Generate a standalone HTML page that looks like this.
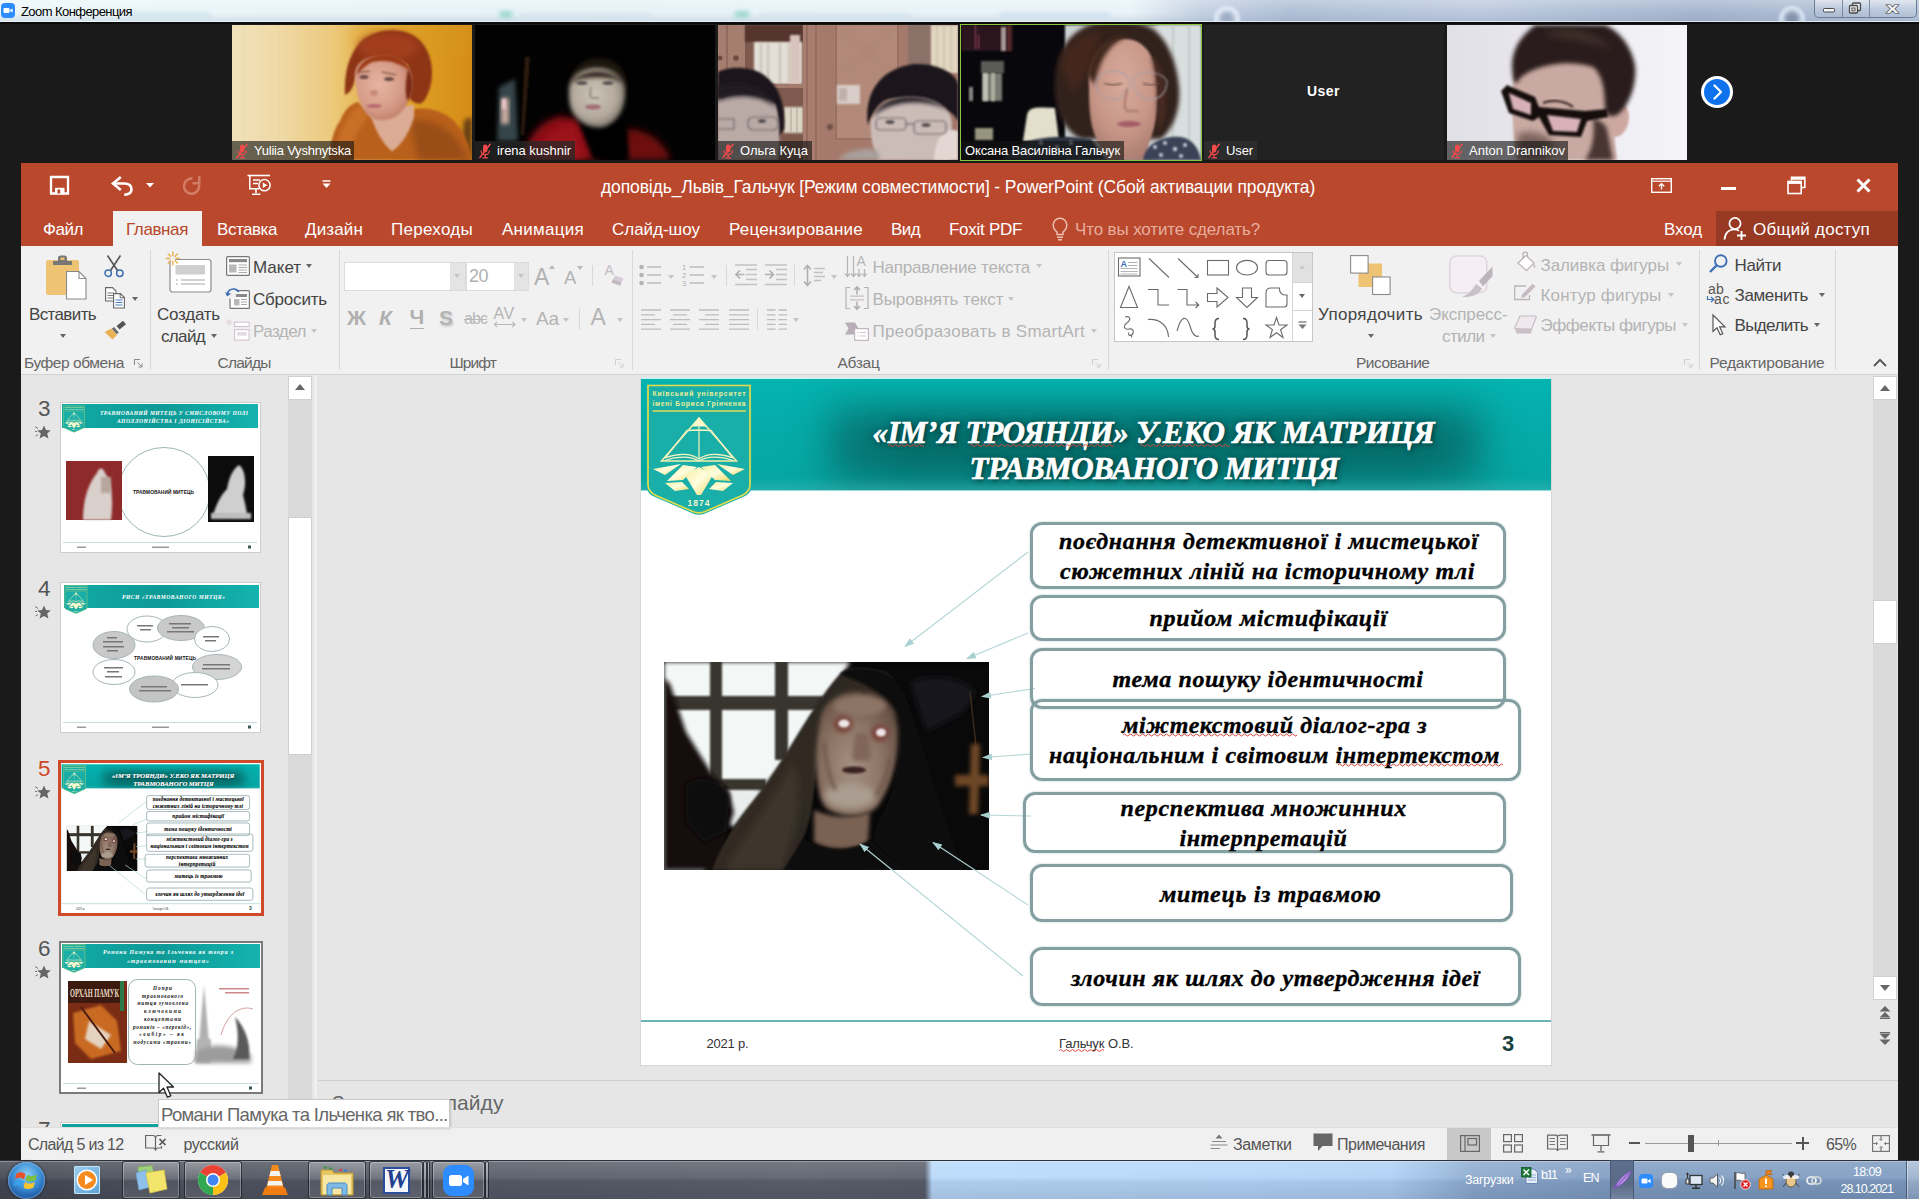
<!DOCTYPE html>
<html lang="ru"><head><meta charset="utf-8"><title>Zoom</title>
<style>
html,body{margin:0;padding:0}
body{width:1919px;height:1199px;background:#1a1a1a;position:relative;overflow:hidden;font-family:"Liberation Sans",sans-serif;}
.a{position:absolute}
.t{position:absolute;white-space:nowrap;line-height:1;}
svg{position:absolute;overflow:visible}
.ser{font-family:"Liberation Serif",serif}
</style></head><body>
<!-- ZOOM TITLE BAR -->
<div class="a" style="left:0;top:0;width:1919px;height:21.500px;background:linear-gradient(90deg,#ecf6f9 0,#e5f2f6 600px,#e9f3f8 1130px,#c4d1e2 1200px,#afbfd6 1290px,#bccade 1480px,#aebed5 1600px,#a5b5ce 1700px,#b6c5da 1919px)"></div>
<div class="a" style="left:0;top:0;width:1919px;height:21px;background:linear-gradient(180deg,rgba(255,255,255,.25) 0,rgba(255,255,255,0) 60%,rgba(120,140,170,.18) 100%)"></div>
<!-- faint blurred background remnants -->
<div class="a" style="left:130px;top:13px;width:80px;height:5px;background:#cfe3ee;filter:blur(2px)"></div>
<div class="a" style="left:500px;top:11px;width:12px;height:7px;background:#9fd8cf;filter:blur(2px)"></div>
<div class="a" style="left:520px;top:14px;width:130px;height:4px;background:#d3e2ef;filter:blur(2px)"></div>
<div class="a" style="left:735px;top:11px;width:14px;height:7px;background:#9fd8cf;filter:blur(2px)"></div>
<div class="a" style="left:760px;top:14px;width:150px;height:4px;background:#d3e2ef;filter:blur(2px)"></div>
<div class="a" style="left:1000px;top:13px;width:110px;height:5px;background:#cfe0f0;filter:blur(2px)"></div>
<div class="a" style="left:0;top:20.500px;width:1919px;height:1px;background:rgba(235,242,250,.8)"></div>
<div class="a" style="left:0;top:21.500px;width:1919px;height:2px;background:#0c0c0c"></div>
<div class="a" style="left:1777px;top:2px;width:30px;height:19px;overflow:hidden"><div class="a" style="left:1px;top:3px;width:28px;height:28px;border-radius:50%;background:radial-gradient(circle,#7f8fa8 0,#8a9ab2 25%,#dbe8f6 55%,rgba(200,215,235,0) 75%);filter:blur(1px)"></div></div>
<div class="a" style="left:1212px;top:2px;width:30px;height:19px;overflow:hidden"><div class="a" style="left:1px;top:3px;width:28px;height:28px;border-radius:50%;background:radial-gradient(circle,#9aa9c0 0,#a5b4ca 25%,#e4eef8 55%,rgba(220,232,245,0) 75%);filter:blur(1px)"></div></div>
<!-- zoom icon -->
<div class="a" style="left:1px;top:3px;width:14px;height:15px;border-radius:4px;background:#2d8cff"></div>
<svg style="left:1px;top:3px" width="14" height="15" viewBox="0 0 14 15"><rect x="2.5" y="5" width="6" height="5" rx="1.2" fill="#fff"></rect><path d="M9 7 L11.6 5.4 V9.6 L9 8 Z" fill="#fff"></path></svg>
<span class="t" style="left: 21px; top: 4.5px; font-size: 13px; color: rgb(0, 0, 0); letter-spacing: -0.57px;">Zoom Конференция</span>
<!-- window buttons -->
<div class="a" style="left:1814px;top:0;width:103px;height:18px;border:1px solid #6d7c93;border-top:none;border-radius:0 0 5px 5px;box-sizing:border-box;background:linear-gradient(180deg,rgba(255,255,255,.45),rgba(255,255,255,.1) 50%,rgba(180,195,215,.2))"></div>
<div class="a" style="left:1842px;top:0;width:1px;height:17px;background:#7b8aa1"></div>
<div class="a" style="left:1869px;top:0;width:1px;height:17px;background:#7b8aa1"></div>
<svg style="left:1814px;top:0" width="103" height="18" viewBox="0 0 103 18">
<rect x="9.500" y="8.500" width="11" height="3.500" rx=".8" fill="#f4f6f8" stroke="#4a4a4a" stroke-width="1"></rect>
<rect x="38.500" y="3" width="8" height="7.500" rx="1" fill="#e8ecf0" stroke="#4a4a4a" stroke-width="1.300"></rect>
<rect x="35.500" y="5.500" width="8" height="7.500" rx="1" fill="#eef1f4" stroke="#4a4a4a" stroke-width="1.300"></rect><rect x="38" y="8" width="3" height="2.800" fill="#f8f8f8" stroke="#4a4a4a" stroke-width="1"></rect>
<text x="72.500" y="13" font-family="Liberation Sans" font-weight="bold" font-size="15" fill="#f4f6f8" stroke="#444" stroke-width="1.100" paint-order="stroke" textLength="12" lengthAdjust="spacingAndGlyphs">x</text>
</svg>

<!-- VIDEO STRIP -->
<svg width="0" height="0"><defs>
<filter id="b2" x="-20%" y="-20%" width="140%" height="140%"><feGaussianBlur stdDeviation="2"></feGaussianBlur></filter>
<filter id="b3" x="-20%" y="-20%" width="140%" height="140%"><feGaussianBlur stdDeviation="3.5"></feGaussianBlur></filter>
<filter id="b6" x="-30%" y="-30%" width="160%" height="160%"><feGaussianBlur stdDeviation="6"></feGaussianBlur></filter>
<filter id="b1" x="-20%" y="-20%" width="140%" height="140%"><feGaussianBlur stdDeviation="1"></feGaussianBlur></filter>
<symbol id="mic" viewBox="0 0 14 16"><rect x="5" y="1.5" width="4.4" height="8" rx="2.2" fill="#f04a4a"></rect><path d="M3 7.5 a4.2 4.2 0 0 0 8.4 0" fill="none" stroke="#f04a4a" stroke-width="1.3"></path><path d="M7.2 12 V14.5 M4.5 14.8 H10" stroke="#f04a4a" stroke-width="1.3"></path><path d="M12.5 0.8 L1.5 15" stroke="#f04a4a" stroke-width="1.5"></path></symbol>
</defs></svg>

<!-- tile 1 -->
<svg style="left:232px;top:25px" width="240" height="135" viewBox="0 0 240 135"><defs><clipPath id="c1"><rect width="240" height="135"></rect></clipPath>
<linearGradient id="g1" x1="0" x2="1"><stop offset="0" stop-color="#f1e2bb"></stop><stop offset=".2" stop-color="#efd9a6"></stop><stop offset=".42" stop-color="#ecc97a"></stop><stop offset=".6" stop-color="#e4b044"></stop><stop offset=".8" stop-color="#dd9c22"></stop><stop offset="1" stop-color="#d48c16"></stop></linearGradient>
<radialGradient id="f1" cx=".42" cy=".45" r=".65"><stop offset="0" stop-color="#e6b5a2"></stop><stop offset=".6" stop-color="#d69c88"></stop><stop offset="1" stop-color="#b87660"></stop></radialGradient></defs>
<g clip-path="url(#c1)"><rect width="240" height="135" fill="url(#g1)"></rect>
<rect x="120" y="0" width="120" height="30" fill="#d89a20" opacity=".35" filter="url(#b6)"></rect>
<g stroke="#e6cf9a" stroke-width="1" opacity=".5"><path d="M12 0 V118 M30 0 V118 M47 0 V118 M66 0 V118 M84 0 V135"></path></g>
<path d="M232 95 L240 92 V135 H228 Z" fill="#6a4218" filter="url(#b2)"></path>
<path d="M97 135 C98 118 102 104 108 96 C112 86 118 79 126 77 L140 92 L160 126 L182 84 C196 82 212 86 222 96 C232 106 238 120 240 135 Z" fill="#b9611e" filter="url(#b1)"></path>
<path d="M178 96 C200 92 224 104 236 135 H186 Z" fill="#8f4612" opacity=".75" filter="url(#b3)"></path>
<path d="M104 120 C112 96 120 84 128 80 L136 92 C126 104 118 120 116 135 H100Z" fill="#c96f26" filter="url(#b2)"></path>
<path d="M137 84 L182 80 L182 92 C178 106 170 120 160 126 C150 118 142 104 137 84 Z" fill="#dcab94" filter="url(#b1)"></path>
<path d="M113 70 C112 50 116 30 128 18 C140 6 160 2 176 8 C192 14 200 30 200 48 C200 60 196 72 190 78 C184 80 178 76 176 70 L176 40 C160 30 140 30 126 44 C122 56 122 66 113 70Z" fill="#8e3417" filter="url(#b1)"></path>
<ellipse cx="156" cy="22" rx="30" ry="14" fill="#a23e1a" filter="url(#b3)"></ellipse>
<path d="M123 52 C122 40 130 32 148 31 C166 30 178 38 180 52 C182 66 176 82 166 90 C158 96 146 97 138 92 C128 84 124 68 123 52Z" fill="url(#f1)" filter="url(#b1)"></path>
<path d="M124 50 C128 34 142 28 158 30 C168 32 176 38 178 46 C166 36 150 34 138 38 C132 42 128 46 124 50Z" fill="#9c3a18" filter="url(#b1)"></path>
<path d="M176 44 C182 52 182 66 176 76 C172 70 174 54 176 44Z" fill="#7a2a12" filter="url(#b1)"></path>
<ellipse cx="132" cy="52" rx="4.500" ry="1.800" fill="#5b3c38" filter="url(#b1)"></ellipse><ellipse cx="157" cy="54" rx="5" ry="1.800" fill="#5b3c38" filter="url(#b1)"></ellipse>
<path d="M126 47 L138 46 M150 47 L164 50" stroke="#8a5a4a" stroke-width="1.300" filter="url(#b1)"></path>
<ellipse cx="142" cy="68" rx="4" ry="3" fill="#c98a78" filter="url(#b1)"></ellipse>
<ellipse cx="142" cy="81" rx="7.500" ry="1.800" fill="#b4606a" filter="url(#b1)"></ellipse>
</g></svg>
<!-- tile 2 -->
<svg style="left:475px;top:25px" width="240" height="135" viewBox="0 0 240 135"><defs><clipPath id="c2"><rect width="240" height="135"></rect></clipPath>
<radialGradient id="f2" cx=".45" cy=".45" r=".6"><stop offset="0" stop-color="#cbc3b6"></stop><stop offset=".65" stop-color="#b3aa9c"></stop><stop offset="1" stop-color="#7a7268"></stop></radialGradient></defs>
<g clip-path="url(#c2)"><rect width="240" height="135" fill="#020202"></rect>
<path d="M24 62 L40 54 L43 116 L22 116 Z" fill="#36454a" filter="url(#b2)"></path><rect x="26" y="73" width="8" height="26" fill="#c9aaa0" filter="url(#b2)"></rect><rect x="27" y="74" width="4" height="10" fill="#e6c0c8" filter="url(#b1)"></rect>
<path d="M50 32 L55 32 L49 110 L46 110 Z" fill="#2e1a10" filter="url(#b1)"></path>
<path d="M48 135 C52 112 64 96 86 91 L104 95 L128 135 Z" fill="#8b0d13" filter="url(#b3)"></path>
<path d="M150 135 L152 104 C170 104 188 114 196 135 Z" fill="#6e0a10" filter="url(#b3)"></path>
<path d="M66 120 C76 104 90 98 100 100 L110 135 H70 Z" fill="#a4121a" opacity=".7" filter="url(#b3)"></path>
<path d="M102 92 L150 96 L154 135 L118 135 Z" fill="#050404" filter="url(#b2)"></path>
<path d="M94 62 C94 46 106 33 124 33 C142 33 152 46 152 62 L150 70 C140 50 110 48 96 70 Z" fill="#1e130e" filter="url(#b2)"></path>
<path d="M94 66 C94 52 106 43 122 43 C140 43 150 54 150 68 C150 84 142 98 128 102 C116 104 102 98 96 84 C94 78 94 72 94 66 Z" fill="url(#f2)" filter="url(#b2)"></path>
<path d="M96 58 C106 44 136 42 148 58 C138 50 108 50 96 58Z" fill="#20140e" filter="url(#b2)"></path>
<ellipse cx="107" cy="58" rx="5.500" ry="1.800" fill="#4e4a48" filter="url(#b1)"></ellipse><ellipse cx="133" cy="58" rx="5.500" ry="1.800" fill="#4e4a48" filter="url(#b1)"></ellipse>
<path d="M116 62 C115 68 114 72 117 73 L124 73" stroke="#8a8276" stroke-width="1.500" fill="none" filter="url(#b1)"></path>
<ellipse cx="118" cy="82" rx="8" ry="2.500" fill="#a06a72" filter="url(#b1)"></ellipse>
</g></svg>
<!-- tile 3 -->
<svg style="left:718px;top:25px" width="240" height="135" viewBox="0 0 240 135"><defs><clipPath id="c3"><rect width="240" height="135"></rect></clipPath></defs>
<g clip-path="url(#c3)"><rect width="240" height="135" fill="#a0766a"></rect>
<rect x="0" y="0" width="27" height="50" fill="#a67e70"></rect><path d="M9 0 V44" stroke="#8c6458" stroke-width="1.500"></path><circle cx="2" cy="33" r="2.500" fill="#6e4e44"></circle><circle cx="18" cy="33" r="2.800" fill="#6e4e44"></circle>
<rect x="27" y="0" width="58" height="135" fill="#7e5a4e"></rect>
<rect x="27" y="0" width="58" height="17" fill="#54362e" filter="url(#b1)"></rect>
<rect x="36" y="17" width="48" height="42" fill="#e4dfd6" filter="url(#b1)"></rect><path d="M43 18 V58 M50 18 V58 M62 18 V58 M71 18 V58 M78 12 V58" stroke="#bfb4a8" stroke-width="1.500" filter="url(#b1)"></path><rect x="72" y="10" width="10" height="49" fill="#d8c4bc" filter="url(#b1)"></rect>
<rect x="27" y="59" width="58" height="4" fill="#a47a6c"></rect>
<rect x="66" y="82" width="19" height="26" fill="#dcd4c4" filter="url(#b1)"></rect><path d="M73 82 V108 M79 82 V108" stroke="#b8ac9c" stroke-width="1.200"></path>
<rect x="85" y="0" width="16" height="135" fill="#a87c6e"></rect><path d="M89 0 V135 M98 0 V135" stroke="#8e665a" stroke-width="1.300"></path>
<rect x="101" y="0" width="90" height="135" fill="#a57a6c"></rect>
<rect x="118" y="0" width="62" height="114" fill="#b38a7a" filter="url(#b1)"></rect><path d="M118 0 V114 H180 V0" fill="none" stroke="#946c5e" stroke-width="1.500"></path>
<path d="M124 4 L174 50 M174 4 L124 50" stroke="#ab8272" stroke-width="6" opacity=".5" filter="url(#b3)"></path>
<circle cx="112" cy="102" r="3" fill="#6e4e44" filter="url(#b1)"></circle>
<rect x="119" y="60" width="23" height="19" fill="#d9cdc9" filter="url(#b1)"></rect><rect x="121" y="63" width="8" height="13" fill="#c0b0ac" filter="url(#b1)"></rect>
<rect x="190" y="0" width="23" height="42" fill="#8a7268" filter="url(#b1)"></rect>
<rect x="213" y="0" width="27" height="48" fill="#e2d8c2" filter="url(#b1)"></rect><path d="M219 0 V46 M226 0 V46 M233 0 V46" stroke="#c9bea6" stroke-width="1.500" filter="url(#b1)"></path>
<path d="M0 47 C10 42 30 40 46 50 C60 60 68 78 66 104 L60 112 L56 80 C40 68 16 70 0 76 Z" fill="#1c181b" filter="url(#b1)"></path>
<path d="M0 74 C16 66 44 66 58 80 C62 96 62 112 60 135 H0 Z" fill="#b9aaa6" filter="url(#b1)"></path>
<path d="M0 62 C18 54 46 58 60 84 C46 70 18 68 0 76Z" fill="#231e21" filter="url(#b2)"></path>
<path d="M150 100 C146 70 160 44 196 39 C222 38 240 50 240 60 V96 C232 80 200 70 170 74 C160 78 154 88 150 100Z" fill="#1a161a" filter="url(#b1)"></path>
<path d="M153 96 C158 78 176 70 200 72 C220 74 234 84 234 100 L232 135 H160 C154 122 152 108 153 96Z" fill="#cbbcb8" filter="url(#b1)"></path>
<path d="M154 92 C166 66 210 64 236 88 C214 74 176 72 154 92Z" fill="#221c20" filter="url(#b2)"></path>
<path d="M222 112 C228 104 236 104 240 106 V135 H216 C216 126 218 118 222 112Z" fill="#e2d7d3" filter="url(#b1)"></path>
<path d="M120 135 C130 124 150 122 160 126 L162 135Z" fill="#a8a09c" filter="url(#b2)"></path>
<g fill="none" stroke="#6e666a" stroke-width="1.200" filter="url(#b1)"><rect x="30" y="92" width="30" height="13" rx="5"></rect><path d="M0 94 H16 V104 H0"></path><rect x="158" y="93" width="30" height="12" rx="4"></rect><rect x="196" y="96" width="32" height="13" rx="4"></rect><path d="M188 99 H196"></path></g>
<g fill="#4a4244" filter="url(#b1)"><ellipse cx="44" cy="96" rx="4" ry="1.800"></ellipse><ellipse cx="172" cy="97" rx="4.500" ry="1.800"></ellipse><ellipse cx="208" cy="100" rx="4.500" ry="1.800"></ellipse></g>
</g></svg>
<!-- tile 4 (active) -->
<svg style="left:961px;top:25px" width="240" height="135" viewBox="0 0 240 135"><defs><clipPath id="c4"><rect width="240" height="135"></rect></clipPath>
<radialGradient id="f4" cx=".5" cy=".35" r=".7"><stop offset="0" stop-color="#d8aa9c"></stop><stop offset=".6" stop-color="#c79687"></stop><stop offset="1" stop-color="#a87a6e"></stop></radialGradient></defs>
<g clip-path="url(#c4)"><rect width="240" height="135" fill="#08080c"></rect>
<rect x="104" y="0" width="136" height="135" fill="#cdd2d2" filter="url(#b1)"></rect>
<rect x="196" y="0" width="44" height="135" fill="#d9dfde" filter="url(#b2)"></rect><path d="M212 0 V135 M228 0 V135" stroke="#c2c9c9" stroke-width="2" filter="url(#b1)"></path>
<rect x="0" y="0" width="52" height="26" fill="#2a161a" filter="url(#b1)"></rect><path d="M14 0 V24 M18 10 V24" stroke="#6a3040" stroke-width="2.500" filter="url(#b1)"></path><rect x="40" y="2" width="5" height="24" fill="#a89a94" filter="url(#b1)"></rect><rect x="46" y="0" width="4" height="26" fill="#5a2a2a" filter="url(#b1)"></rect>
<rect x="20" y="36" width="23" height="12" fill="#5a5c54" filter="url(#b1)"></rect>
<rect x="21" y="48" width="20" height="28" fill="#767a70" filter="url(#b1)"></rect><rect x="22" y="48" width="5" height="28" fill="#c2c2b6" filter="url(#b1)"></rect><rect x="30" y="48" width="4" height="28" fill="#b0b0a2" filter="url(#b1)"></rect><rect x="8" y="62" width="4" height="14" fill="#8a8a86" filter="url(#b1)"></rect>
<rect x="14" y="103" width="18" height="12" fill="#96967e" filter="url(#b1)"></rect>
<path d="M62 116 L66 90 C68 82 74 82 94 83 L98 116 Z" fill="#e4dfcc" filter="url(#b1)"></path>
<path d="M94 70 C92 40 100 14 124 2 C140 -6 176 -6 192 4 C208 16 216 40 218 62 C220 84 212 104 200 114 L120 114 C104 106 96 90 94 70 Z" fill="#33201b" filter="url(#b2)"></path>
<path d="M100 40 C104 20 120 8 140 6 L130 40 L112 70 Z" fill="#44281f" filter="url(#b3)"></path>
<path d="M128 62 C126 40 136 18 160 14 C180 12 194 28 196 52 C198 76 196 100 188 118 L186 135 H146 C140 124 132 110 130 96 C128 84 128 72 128 62Z" fill="url(#f4)" filter="url(#b1)"></path>
<path d="M126 50 C128 26 146 8 170 10 C150 16 138 34 134 60Z" fill="#40251e" filter="url(#b2)"></path>
<path d="M190 30 C206 44 210 80 198 108 C196 86 198 58 190 30Z" fill="#4a2a22" filter="url(#b2)"></path>
<path d="M42 135 C50 118 80 110 110 112 L130 114 L146 135 Z" fill="#2a3040" filter="url(#b1)"></path>
<path d="M182 135 C184 120 200 110 220 112 C232 114 238 124 240 135 Z" fill="#3a4258" filter="url(#b1)"></path>
<g fill="#c8ced8" filter="url(#b1)"><circle cx="194" cy="122" r="2"></circle><circle cx="204" cy="118" r="2"></circle><circle cx="214" cy="124" r="2.200"></circle><circle cx="224" cy="120" r="2"></circle><circle cx="200" cy="130" r="2"></circle><circle cx="220" cy="131" r="2"></circle><circle cx="80" cy="118" r="2"></circle><circle cx="96" cy="122" r="2"></circle><circle cx="110" cy="118" r="2"></circle></g>
<path d="M135 56 C140 44 160 42 168 54 C170 66 160 76 148 74 C140 72 134 66 135 56Z M172 54 C180 44 200 46 206 56 C206 68 198 76 186 74 C178 72 172 64 172 54Z" fill="none" stroke="#a8a0a6" stroke-width="1.100" filter="url(#b1)"></path>
<path d="M143 58 C148 61 156 61 161 58 M182 58 C186 61 194 61 198 58" stroke="#6a4a44" stroke-width="1.300" fill="none" filter="url(#b1)"></path>
<path d="M166 64 C164 76 162 82 166 86 L178 86" stroke="#a87a6e" stroke-width="2" fill="none" filter="url(#b1)"></path>
<ellipse cx="168" cy="99" rx="12" ry="3" fill="#a45c68" filter="url(#b1)"></ellipse>
</g></svg>
<div class="a" style="left:960px;top:24px;width:242px;height:137px;box-sizing:border-box;border:1.5px solid #8cc63f"></div>
<!-- tile 5 -->
<div class="a" style="left:1204px;top:25px;width:240px;height:135px;background:#222222"></div>
<span class="t" style="left: 1307px; top: 84px; font-size: 14px; color: rgb(255, 255, 255); font-weight: bold; letter-spacing: 0.46px;">User</span>
<!-- tile 6 -->
<svg style="left:1447px;top:25px" width="240" height="135" viewBox="0 0 240 135"><defs><clipPath id="c6"><rect width="240" height="135"></rect></clipPath>
<linearGradient id="g6" x1="0" x2="1"><stop offset="0" stop-color="#e2e0e7"></stop><stop offset=".5" stop-color="#ebe9ef"></stop><stop offset="1" stop-color="#f5f5f9"></stop></linearGradient></defs>
<g clip-path="url(#c6)"><rect width="240" height="135" fill="url(#g6)"></rect>
<path d="M66 60 C66 40 80 24 110 24 C150 24 166 40 166 76 L166 100 L170 135 H70 C66 110 64 80 66 60Z" fill="#c9aaa2" filter="url(#b1)"></path>
<path d="M160 82 C170 74 182 78 182 92 C182 104 174 114 164 112 Z" fill="#cda8a0" filter="url(#b1)"></path>
<path d="M88 0 C70 14 62 30 66 52 C68 62 70 58 74 52 C90 40 120 34 146 42 C156 50 158 66 158 84 C160 92 164 92 170 90 C182 82 190 60 188 40 C184 20 172 6 158 0 Z" fill="#2a1d1b" filter="url(#b2)"></path>
<path d="M96 10 C120 0 150 6 166 26 C150 16 120 14 96 10Z" fill="#40302c" filter="url(#b3)"></path>
<path d="M146 92 C152 96 158 98 160 104 L166 135 H138 C146 124 148 108 146 92Z" fill="#4a3631" filter="url(#b2)"></path>
<path d="M70 110 C80 104 96 108 106 116 L100 135 H72 Z" fill="#5a4540" opacity=".7" filter="url(#b3)"></path>
<path d="M60 64 L84 74 L86 92 L66 86 Z M96 88 L136 92 L132 108 L104 106 Z" fill="#d7b1b6" filter="url(#b1)"></path>
<path d="M54 66 L60 60 L88 72 L92 82 L138 86 L160 84 L161 92 L140 96 L134 112 L102 110 L92 92 L86 96 L62 88 Z M62 68 L66 84 L84 90 L84 78 Z M100 90 L106 106 L130 107 L134 94 Z" fill="#14100f" fill-rule="evenodd" filter="url(#b1)"></path>
<path d="M96 78 C106 74 118 76 126 82" stroke="#3a2826" stroke-width="2.200" fill="none" filter="url(#b1)"></path>
</g></svg>
<!-- next arrow -->
<div class="a" style="left:1701px;top:76px;width:32px;height:32px;border-radius:50%;background:#fff"></div>
<div class="a" style="left:1704px;top:79px;width:26px;height:26px;border-radius:50%;background:#0e72ed"></div>
<svg style="left:1704px;top:79px" width="26" height="26" viewBox="0 0 26 26"><path d="M10.5 6.5 L17 13 L10.5 19.5" fill="none" stroke="#fff" stroke-width="2.2" stroke-linecap="round" stroke-linejoin="round"></path></svg>

<!-- name labels -->
<div class="a" style="left:232px;top:141px;width:122px;height:19px;background:rgba(20,20,20,.62)"></div>
<svg style="left:235px;top:143px" width="14" height="16"><use href="#mic"></use></svg>
<span class="t" style="left: 254px; top: 144px; font-size: 13px; color: rgb(255, 255, 255); letter-spacing: -0.22px;">Yuliia Vyshnytska</span>
<div class="a" style="left:475px;top:141px;width:100px;height:19px;background:rgba(40,40,40,.75)"></div>
<svg style="left:478px;top:143px" width="14" height="16"><use href="#mic"></use></svg>
<span class="t" style="left: 497px; top: 144px; font-size: 13px; color: rgb(255, 255, 255); letter-spacing: -0.03px;">irena kushnir</span>
<div class="a" style="left:718px;top:141px;width:94px;height:19px;background:rgba(20,20,20,.62)"></div>
<svg style="left:721px;top:143px" width="14" height="16"><use href="#mic"></use></svg>
<span class="t" style="left: 740px; top: 144px; font-size: 13px; color: rgb(255, 255, 255); letter-spacing: -0.04px;">Ольга Куца</span>
<div class="a" style="left:961px;top:141px;width:163px;height:19px;background:rgba(20,20,20,.62)"></div>
<span class="t" style="left: 965px; top: 144px; font-size: 13px; color: rgb(255, 255, 255); letter-spacing: -0.16px;">Оксана Василівна Гальчук</span>
<div class="a" style="left:1204px;top:141px;width:53px;height:19px;background:#2c2c2c"></div>
<svg style="left:1207px;top:143px" width="14" height="16"><use href="#mic"></use></svg>
<span class="t" style="left: 1226px; top: 144px; font-size: 13px; color: rgb(255, 255, 255); letter-spacing: -0.11px;">User</span>
<div class="a" style="left:1447px;top:141px;width:121px;height:19px;background:rgba(20,20,20,.62)"></div>
<svg style="left:1450px;top:143px" width="14" height="16"><use href="#mic"></use></svg>
<span class="t" style="left: 1469px; top: 144px; font-size: 13px; color: rgb(255, 255, 255); letter-spacing: -0.01px;">Anton Drannikov</span>
<!-- PPT WINDOW -->
<div class="a" style="left:21px;top:162.500px;width:1877px;height:83.500px;background:#ba482d"></div>
<div class="a" style="left:21px;top:246px;width:1877px;height:128px;background:#f1f1f1"></div>
<div class="a" style="left:21px;top:374px;width:1877px;height:754px;background:#e6e6e6"></div>
<div class="a" style="left:21px;top:374px;width:1877px;height:1px;background:#d2d2d2"></div>
<div class="a" style="left:21px;top:1128px;width:1877px;height:32px;background:#f0f0f0"></div>
<!-- QAT icons -->
<svg style="left:49px;top:175px" width="21" height="20" viewBox="0 0 21 20"><path d="M2 2 H19 V18.500 H2 Z" fill="none" stroke="#fff" stroke-width="2.300"></path><rect x="6" y="12.800" width="9.500" height="6.500" fill="#fff"></rect><rect x="8.500" y="14.500" width="2.700" height="4" fill="#ba482d"></rect></svg>
<svg style="left:110px;top:175px" width="24" height="22" viewBox="0 0 24 22"><path d="M3 8.500 H14 C19 8.500 21.500 11 21.500 14.300 C21.500 18 18.500 19.700 14.200 19.700" fill="none" stroke="#fff" stroke-width="2.600"></path><path d="M10.800 2 L3 8.500 L10.800 15" fill="none" stroke="#fff" stroke-width="2.600"></path></svg>
<svg style="left:146px;top:183px" width="8" height="5" viewBox="0 0 8 5"><path d="M0 0 H8 L4 4.5Z" fill="#fff"></path></svg>
<svg style="left:181px;top:175px" width="21" height="21" viewBox="0 0 21 21"><path d="M11.500 3.600 A7.600 7.600 0 1 0 18 9.500" fill="none" stroke="#d27e67" stroke-width="2.500"></path><path d="M18.300 1 V8.300 H11.500" fill="none" stroke="#d27e67" stroke-width="2.500"></path></svg>
<svg style="left:247px;top:174px" width="26" height="22" viewBox="0 0 26 22"><path d="M0.5 1.5 H23" stroke="#fff" stroke-width="1.6"></path><path d="M2.8 2 V14.8 H12" fill="none" stroke="#fff" stroke-width="1.5"></path><path d="M6 6 H13 M6 9.5 H11" stroke="#fff" stroke-width="1.4"></path><path d="M9 15 V19 M5 20.2 H13.5" stroke="#fff" stroke-width="1.6"></path><circle cx="17.5" cy="11.2" r="5.6" fill="#ba482d" stroke="#fff" stroke-width="1.5"></circle><path d="M15.8 8.4 L20.4 11.2 L15.8 14Z" fill="#fff"></path></svg>
<svg style="left:322px;top:180px" width="9" height="9" viewBox="0 0 9 9"><path d="M0.5 1 H8.5" stroke="#fff" stroke-width="1.5"></path><path d="M0.5 3.5 H8.5 L4.5 8Z" fill="#fff"></path></svg>
<span class="t" style="left: 601px; top: 179px; font-size: 17.5px; color: rgb(255, 255, 255); letter-spacing: -0.12px;">доповідь_Львів_Гальчук [Режим совместимости] - PowerPoint (Сбой активации продукта)</span>
<!-- window controls -->
<svg style="left:1651px;top:178px" width="21" height="15" viewBox="0 0 21 15"><rect x=".7" y=".7" width="19.6" height="13.6" fill="none" stroke="#fff" stroke-width="1.4"></rect><path d="M1 3.2 H20" stroke="#fff" stroke-width="1.2"></path><path d="M10.5 11.5 V6 M7.8 8.2 L10.5 5.6 L13.2 8.2" fill="none" stroke="#fff" stroke-width="1.4"></path></svg>
<div class="a" style="left:1721px;top:187px;width:15px;height:3px;background:#fff"></div>
<svg style="left:1787px;top:176px" width="19" height="19" viewBox="0 0 19 19"><path d="M4.5 4.5 V1.2 H17.8 V11.5 H14.5" fill="none" stroke="#fff" stroke-width="1.6"></path><path d="M4.5 2.6 H17.8" stroke="#fff" stroke-width="2.4"></path><rect x="1" y="5.5" width="13.2" height="12" fill="none" stroke="#fff" stroke-width="1.6"></rect><path d="M1 6.6 H14.2" stroke="#fff" stroke-width="2.6"></path></svg>
<svg style="left:1856px;top:178px" width="15" height="15" viewBox="0 0 15 15"><path d="M1.5 1.5 L13.5 13.5 M13.5 1.5 L1.5 13.5" stroke="#fff" stroke-width="3"></path></svg>
<!-- TABS -->
<div class="a" style="left:113px;top:211px;width:89px;height:36px;background:#f1f1f1"></div>
<span class="t" style="left: 43px; top: 221px; font-size: 17px; color: rgb(255, 255, 255); letter-spacing: -0.45px;">Файл</span>
<span class="t" style="left: 126px; top: 221px; font-size: 17px; color: rgb(183, 71, 42); letter-spacing: -0.39px;">Главная</span>
<span class="t" style="left: 217px; top: 221px; font-size: 17px; color: rgb(255, 255, 255); letter-spacing: -0.46px;">Вставка</span>
<span class="t" style="left: 305px; top: 221px; font-size: 17px; color: rgb(255, 255, 255); letter-spacing: 0.14px;">Дизайн</span>
<span class="t" style="left: 391px; top: 221px; font-size: 17px; color: rgb(255, 255, 255); letter-spacing: 0.28px;">Переходы</span>
<span class="t" style="left: 502px; top: 221px; font-size: 17px; color: rgb(255, 255, 255); letter-spacing: 0.27px;">Анимация</span>
<span class="t" style="left: 612px; top: 221px; font-size: 17px; color: rgb(255, 255, 255); letter-spacing: -0.02px;">Слайд-шоу</span>
<span class="t" style="left: 729px; top: 221px; font-size: 17px; color: rgb(255, 255, 255); letter-spacing: 0.19px;">Рецензирование</span>
<span class="t" style="left: 891px; top: 221px; font-size: 17px; color: rgb(255, 255, 255); letter-spacing: -0.59px;">Вид</span>
<span class="t" style="left: 949px; top: 221px; font-size: 17px; color: rgb(255, 255, 255); letter-spacing: -0.28px;">Foxit PDF</span>
<svg style="left:1052px;top:217px" width="16" height="24" viewBox="0 0 16 24"><path d="M5 17.5 V15 C2.5 13 1.2 10.8 1.2 8 A6.8 6.8 0 0 1 14.8 8 C14.8 10.8 13.5 13 11 15 V17.5 Z" fill="none" stroke="#ecc0b2" stroke-width="1.5"></path><path d="M5 20.2 H11 M6 22.8 H10" stroke="#ecc0b2" stroke-width="1.5"></path></svg>
<span class="t" style="left: 1075px; top: 221px; font-size: 17px; color: rgb(230, 174, 158); letter-spacing: -0.13px;">Что вы хотите сделать?</span>
<span class="t" style="left: 1664px; top: 221px; font-size: 17px; color: rgb(255, 255, 255); letter-spacing: -0.12px;">Вход</span>
<div class="a" style="left:1716px;top:211px;width:182px;height:35px;background:#983924"></div>
<svg style="left:1723px;top:216px" width="24" height="25" viewBox="0 0 24 25"><circle cx="12" cy="7.5" r="5.6" fill="none" stroke="#fff" stroke-width="1.7"></circle><path d="M1.5 23.5 C2 16 7 13.5 11 13.5 C13.5 13.5 15 14 16 14.8" fill="none" stroke="#fff" stroke-width="1.7"></path><path d="M18.5 15 V24 M14 19.5 H23" stroke="#fff" stroke-width="1.9"></path></svg>
<span class="t" style="left: 1753px; top: 221px; font-size: 17px; color: rgb(255, 255, 255); letter-spacing: 0.23px;">Общий доступ</span>
<!-- RIBBON A -->
<style>.rt{font-size:17px;color:#444;margin-top:.7px}.rd{font-size:17px;color:#b4b4b4;margin-top:.7px}.gl{font-size:15.5px;color:#666}.sep{position:absolute;width:1px;background:#d8d8d8}.dd{position:absolute;width:0;height:0;border-left:3.5px solid transparent;border-right:3.5px solid transparent;border-top:4px solid #666}.ddd{position:absolute;width:0;height:0;border-left:3.5px solid transparent;border-right:3.5px solid transparent;border-top:4px solid #c4c4c4}</style>
<!-- paste -->
<svg style="left:46px;top:255px" width="41" height="45" viewBox="0 0 41 45"><rect x="0" y="5" width="33" height="35" rx="2" fill="#efc374"></rect><path d="M7 10 V6 H12 V3 C12 1.5 13 0.5 14.5 0.5 H18.5 C20 0.5 21 1.5 21 3 V6 H26 V10 Z" fill="#777"></path><rect x="14.5" y="2.5" width="4" height="2.5" fill="#efc374"></rect><path d="M20.5 16.5 H33 L40 23.5 V44 H20.5 Z" fill="#fff" stroke="#8a8a8a" stroke-width="1.1"></path><path d="M33 16.5 V23.5 H40" fill="none" stroke="#8a8a8a" stroke-width="1.1"></path></svg>
<span class="t rt" style="left: 29px; top: 305px; letter-spacing: -0.63px;">Вставить</span>
<div class="dd" style="left:60px;top:334px"></div>
<!-- scissors -->
<svg style="left:104px;top:255px" width="20" height="23" viewBox="0 0 20 23"><path d="M3.5 0.5 L13.5 15.5 M16.5 0.5 L6.5 15.5" stroke="#555" stroke-width="1.6"></path><circle cx="4.2" cy="18.3" r="3.2" fill="none" stroke="#3f6fb5" stroke-width="1.5"></circle><circle cx="15.8" cy="18.3" r="3.2" fill="none" stroke="#3f6fb5" stroke-width="1.5"></circle></svg>
<!-- copy -->
<svg style="left:105px;top:287px" width="21" height="22" viewBox="0 0 21 22"><path d="M0.6 0.6 H7.5 L11 4 V14 H0.6 Z" fill="#fff" stroke="#666" stroke-width="1.1"></path><path d="M2.5 6 H9 M2.5 8.5 H9 M2.5 11 H9" stroke="#777" stroke-width="1"></path><path d="M8.6 6.6 H15.5 L19.4 10.5 V21 H8.6 Z" fill="#fff" stroke="#666" stroke-width="1.1"></path><path d="M15.2 6.6 V10.8 H19.4" fill="none" stroke="#666" stroke-width="1"></path><path d="M10.5 13 H17.5 M10.5 15.5 H17.5 M10.5 18 H17.5" stroke="#4a7cc0" stroke-width="1"></path></svg>
<div class="dd" style="left:132px;top:297px"></div>
<!-- format painter -->
<svg style="left:104px;top:320px" width="23" height="20" viewBox="0 0 23 20"><path d="M12.5 6 L19 0.8 L22 4.2 L15.6 9.6 Z" fill="#555"></path><path d="M10 7 L14.8 12.4 L12.6 14.2 L7.8 8.8 Z" fill="#6a6a6a"></path><path d="M0.5 12 L7.2 8.6 L13 15 L8.5 19.6 Z" fill="#e9b254"></path></svg>
<span class="t gl" style="left: 24px; top: 355px; letter-spacing: -0.44px;">Буфер обмена</span>
<svg style="left:134px;top:359px" width="9" height="9" viewBox="0 0 9 9"><path d="M0.5 6 V0.5 H6" fill="none" stroke="#888" stroke-width="1"></path><path d="M3.5 3.5 L8 8 M8 4.5 V8 H4.5" fill="none" stroke="#888" stroke-width="1"></path></svg>
<div class="sep" style="left:150px;top:250px;height:120px"></div>
<!-- new slide -->
<svg style="left:165px;top:251px" width="47" height="42" viewBox="0 0 47 42"><rect x="5" y="8.5" width="41" height="32.5" rx="2.5" fill="#fff" stroke="#8c8c8c" stroke-width="1.2"></rect><rect x="10.5" y="14" width="29.5" height="9.5" fill="#cfcfcf"></rect><path d="M11 29 H13 M16 29 H40 M11 33 H13 M16 33 H40" stroke="#c4c4c4" stroke-width="1.3"></path><g stroke="#e9b254" stroke-width="1.5"><path d="M7.8 0.5 V14.5 M0.8 7.5 H14.8 M2.8 2.5 L12.8 12.5 M12.8 2.5 L2.8 12.5"></path></g><circle cx="7.8" cy="7.5" r="2.6" fill="#f1f1f1"></circle></svg>
<span class="t rt" style="left: 157px; top: 305px; letter-spacing: -0.23px;">Создать</span>
<span class="t rt" style="left: 161px; top: 327px; letter-spacing: -0.66px;">слайд</span>
<div class="dd" style="left:210.5px;top:334px"></div>
<!-- layout -->
<svg style="left:226px;top:256px" width="24" height="20" viewBox="0 0 24 20"><rect x=".6" y=".6" width="22.8" height="18.8" rx="1" fill="#fff" stroke="#777" stroke-width="1.2"></rect><rect x="3" y="3" width="18" height="3.2" fill="#8a8a8a"></rect><rect x="3" y="8.5" width="7.5" height="8" fill="#b9b9b9"></rect><path d="M12.5 9 H21 M12.5 11.5 H21 M12.5 14 H21 M12.5 16.5 H21" stroke="#aaa" stroke-width="1"></path></svg>
<span class="t rt" style="left: 253px; top: 258px; letter-spacing: -0.02px;">Макет</span>
<div class="dd" style="left:305.5px;top:264px"></div>
<!-- reset -->
<svg style="left:225px;top:287px" width="26" height="22" viewBox="0 0 26 22"><rect x="5" y="3.6" width="19.4" height="17.8" rx="1" fill="#fff" stroke="#777" stroke-width="1.2"></rect><rect x="9" y="7" width="13" height="3" fill="#8a8a8a"></rect><rect x="9" y="12" width="5.5" height="6.5" fill="#b9b9b9"></rect><path d="M16 12.5 H22 M16 15 H22 M16 17.5 H22" stroke="#aaa" stroke-width="1"></path><rect x="0" y="0" width="11" height="11.5" fill="#f1f1f1"></rect><path d="M2.2 8.5 C2.2 3.8 5.5 1.8 9 2 C11.5 2.2 13 3.5 13.8 5" fill="none" stroke="#3f6fb5" stroke-width="1.7"></path><path d="M0 5.2 L2.4 9.6 L6 6.4 Z" fill="#3f6fb5"></path></svg>
<span class="t rt" style="left: 253px; top: 290px; letter-spacing: -0.2px;">Сбросить</span>
<!-- section (disabled) -->
<svg style="left:226px;top:319px" width="24" height="22" viewBox="0 0 24 22"><g stroke="#e0d3dc" stroke-width="1"><path d="M3.2 0 V6.5 M0 3.2 H6.5 M1 1 L5.4 5.4 M5.4 1 L1 5.4"></path></g><rect x="8.6" y="3.2" width="14.5" height="4.3" fill="#fff" stroke="#d2c3cf" stroke-width="1.1"></rect><rect x="8.6" y="10.6" width="14.5" height="10.5" fill="#fff" stroke="#d2c3cf" stroke-width="1.1"></rect><rect x="11" y="13.2" width="9.7" height="3.4" fill="#e4d9e1"></rect></svg>
<span class="t rd" style="left: 253px; top: 322.5px; letter-spacing: -0.53px;">Раздел</span>
<div class="ddd" style="left:311px;top:329px"></div>
<span class="t gl" style="left: 217.5px; top: 355px; letter-spacing: -0.78px;">Слайды</span>
<div class="sep" style="left:339px;top:250px;height:120px"></div>
<!-- font boxes -->
<div class="a" style="left:344px;top:262px;width:122px;height:29px;box-sizing:border-box;border:1px solid #dcdcdc;background:#fff"></div>
<div class="a" style="left:450px;top:263px;width:15px;height:27px;background:#e4e4e4"></div>
<div class="ddd" style="left:454px;top:274px"></div>
<div class="a" style="left:466px;top:262px;width:63px;height:29px;box-sizing:border-box;border:1px solid #dcdcdc;background:#fff"></div>
<div class="a" style="left:514px;top:263px;width:14px;height:27px;background:#e4e4e4"></div>
<div class="ddd" style="left:517.5px;top:274px"></div>
<span class="t" style="left: 469px; top: 267px; font-size: 18px; color: rgb(176, 176, 176); letter-spacing: -0.52px;">20</span>
<!-- grow / shrink -->
<span class="t" style="left:534px;top:265.500px;font-size:23px;color:#b2b2b2">A</span><div class="a" style="left:549px;top:265px;width:0;height:0;border-left:3px solid transparent;border-right:3px solid transparent;border-bottom:4px solid #b8b8b8"></div>
<span class="t" style="left:564px;top:269.300px;font-size:18.500px;color:#b2b2b2">A</span><div class="a" style="left:577px;top:266px;width:0;height:0;border-left:3px solid transparent;border-right:3px solid transparent;border-top:4px solid #b8b8b8"></div>
<div class="sep" style="left:592px;top:265px;height:21px"></div>
<svg style="left:604px;top:264px" width="21" height="23" viewBox="0 0 21 23"><text x="0.5" y="11" font-family="Liberation Sans" font-size="14" fill="#c4bcc4">A</text><path d="M11 11.5 L19.5 14.5 L16 21.5 L7.5 18.5 Z" fill="#d5ccd5"></path><path d="M7.5 18.5 L9 15.5 L17.5 18.5 L16 21.5Z" fill="#c2b8c2"></path></svg>
<!-- row 2 -->
<span class="t" style="left: 347px; top: 307px; font-size: 21px; font-weight: bold; color: rgb(176, 176, 176); letter-spacing: 2.02px;">Ж</span>
<span class="t" style="left: 379px; top: 307px; font-size: 21px; font-weight: bold; font-style: italic; color: rgb(176, 176, 176); letter-spacing: 2.08px;">К</span>
<span class="t" style="left: 409.5px; top: 307px; font-size: 21px; font-weight: bold; color: rgb(176, 176, 176); border-bottom: 1.5px solid rgb(176, 176, 176); line-height: 0.98; letter-spacing: -0.27px;">Ч</span>
<span class="t" style="left: 439px; top: 307px; font-size: 21px; font-weight: bold; color: rgb(180, 180, 180); text-shadow: rgb(204, 204, 204) 1px 2px 2px; letter-spacing: -1.02px;">S</span>
<span class="t" style="left: 464px; top: 311px; font-size: 16px; color: rgb(184, 184, 184); text-decoration: line-through; letter-spacing: -0.93px;">abc</span>
<span class="t" style="left: 493.5px; top: 306px; font-size: 16px; color: rgb(180, 180, 180); letter-spacing: 0.42px;">AV</span>
<svg style="left:494px;top:321px" width="22" height="7" viewBox="0 0 22 7"><path d="M0 3.5 H21 M3 0.8 L0.4 3.5 L3 6.2 M18.4 0.8 L21 3.5 L18.4 6.2" fill="none" stroke="#b8b8b8" stroke-width="1.1"></path></svg>
<div class="ddd" style="left:520.5px;top:318px"></div>
<span class="t" style="left: 536px; top: 309px; font-size: 19px; color: rgb(180, 180, 180); letter-spacing: -0.12px;">Aa</span>
<div class="ddd" style="left:562.5px;top:318px"></div>
<div class="sep" style="left:579px;top:309px;height:21px"></div>
<span class="t" style="left: 590.5px; top: 306px; font-size: 23px; color: rgb(180, 180, 180); letter-spacing: -0.34px;">A</span>
<div class="ddd" style="left:616.5px;top:318px"></div>
<span class="t gl" style="left: 449.5px; top: 355px; letter-spacing: -0.9px;">Шрифт</span>
<svg style="left:615px;top:359px" width="9" height="9" viewBox="0 0 9 9"><path d="M0.5 6 V0.5 H6" fill="none" stroke="#cfcfcf" stroke-width="1"></path><path d="M3.5 3.5 L8 8 M8 4.5 V8 H4.5" fill="none" stroke="#cfcfcf" stroke-width="1"></path></svg>
<div class="sep" style="left:632px;top:250px;height:120px"></div>
<!-- RIBBON B: paragraph -->
<svg style="left:639px;top:264px" width="23" height="22" viewBox="0 0 23 22"><g fill="#b4b4b4"><circle cx="2.6" cy="3" r="2.3"></circle><circle cx="2.6" cy="11" r="2.3"></circle><circle cx="2.6" cy="19" r="2.3"></circle></g><path d="M8 3 H22 M8 11 H22 M8 19 H22" stroke="#bdbdbd" stroke-width="1.3"></path></svg>
<div class="ddd" style="left:668px;top:274.5px"></div>
<svg style="left:682px;top:264px" width="23" height="23" viewBox="0 0 23 23"><g font-family="Liberation Sans" font-size="7.5" fill="#b0b0b0"><text x="0" y="6">1</text><text x="0" y="14">2</text><text x="0" y="22">3</text></g><path d="M7.5 3 H22 M7.5 11 H22 M7.5 19 H22" stroke="#bdbdbd" stroke-width="1.3"></path></svg>
<div class="ddd" style="left:711px;top:274.5px"></div>
<div class="sep" style="left:726px;top:265px;height:21px"></div>
<svg style="left:735px;top:264px" width="22" height="22" viewBox="0 0 22 22"><path d="M0 1 H22 M11 5.5 H22 M11 10.5 H22 M11 15.5 H22 M0 20.5 H22" stroke="#c2c2c2" stroke-width="1.3"></path><path d="M9.5 10.5 H1.5 M5 6.5 L1 10.5 L5 14.5" fill="none" stroke="#b0b0b0" stroke-width="1.7"></path></svg>
<svg style="left:764.5px;top:264px" width="22" height="22" viewBox="0 0 22 22"><path d="M0 1 H22 M11 5.5 H22 M11 10.5 H22 M11 15.5 H22 M0 20.5 H22" stroke="#c2c2c2" stroke-width="1.3"></path><path d="M0 10.5 H8 M4.5 6.5 L8.5 10.5 L4.5 14.5" fill="none" stroke="#b0b0b0" stroke-width="1.7"></path></svg>
<div class="sep" style="left:794px;top:265px;height:21px"></div>
<svg style="left:803px;top:264px" width="23" height="23" viewBox="0 0 23 23"><path d="M4.5 2 V21 M1 5.5 L4.5 1.5 L8 5.5 M1 17.5 L4.5 21.5 L8 17.5" fill="none" stroke="#b0b0b0" stroke-width="1.6"></path><path d="M11 4.5 H22 M11 8.5 H20 M11 12.5 H22 M11 16.5 H18" stroke="#c2c2c2" stroke-width="1.3"></path></svg>
<div class="ddd" style="left:830.5px;top:274.5px"></div>
<!-- row 2 aligns -->
<svg style="left:640.5px;top:309px" width="20" height="21" viewBox="0 0 20 21"><path d="M0 1 H20 M0 5.8 H14 M0 10.6 H20 M0 15.4 H14 M0 20.2 H20" stroke="#bdbdbd" stroke-width="1.3"></path></svg>
<svg style="left:670px;top:309px" width="20" height="21" viewBox="0 0 20 21"><path d="M0 1 H20 M3 5.8 H17 M0 10.6 H20 M3 15.4 H17 M0 20.2 H20" stroke="#bdbdbd" stroke-width="1.3"></path></svg>
<svg style="left:699px;top:309px" width="20" height="21" viewBox="0 0 20 21"><path d="M0 1 H20 M6 5.8 H20 M0 10.6 H20 M6 15.4 H20 M0 20.2 H20" stroke="#bdbdbd" stroke-width="1.3"></path></svg>
<svg style="left:728.5px;top:309px" width="20" height="21" viewBox="0 0 20 21"><path d="M0 1 H20 M0 5.8 H20 M0 10.6 H20 M0 15.4 H20 M0 20.2 H20" stroke="#bdbdbd" stroke-width="1.3"></path></svg>
<div class="sep" style="left:757px;top:309px;height:21px"></div>
<svg style="left:767px;top:309px" width="20" height="21" viewBox="0 0 20 21"><path d="M0 1 H8.5 M11.5 1 H20 M0 5.8 H8.5 M11.5 5.8 H20 M0 10.6 H8.5 M11.5 10.6 H20 M0 15.4 H8.5 M11.5 15.4 H20 M0 20.2 H8.5 M11.5 20.2 H20" stroke="#bdbdbd" stroke-width="1.3"></path></svg>
<div class="ddd" style="left:793px;top:318px"></div>
<!-- right column -->
<svg style="left:845px;top:254px" width="24" height="24" viewBox="0 0 24 24"><path d="M2.5 2 V22 M0 19.5 L2.5 22.5 L5 19.5 M8.5 2 V22 M6 19.5 L8.5 22.5 L11 19.5 M14 15 V22 M11.7 19.5 L14 22.5 L16.3 19.5 M19.5 15 V22 M17.2 19.5 L19.5 22.5 L21.8 19.5" fill="none" stroke="#b4b4b4" stroke-width="1.2"></path><text x="11.5" y="11.5" font-family="Liberation Sans" font-size="14" fill="#b8b8b8">A</text></svg>
<span class="t rd" style="left: 872.5px; top: 258px; letter-spacing: -0.2px;">Направление текста</span>
<div class="ddd" style="left:1036px;top:264px"></div>
<svg style="left:845px;top:286px" width="24" height="24" viewBox="0 0 24 24"><path d="M5 1.5 H1 V22.5 H5 M19 1.5 H23 V22.5 H19" fill="none" stroke="#b8b0b8" stroke-width="1.2"></path><path d="M12 1 V8.5 M9 4 L12 0.8 L15 4 M12 23 V15.5 M9 20 L12 23.2 L15 20" fill="none" stroke="#a8a8a8" stroke-width="1.4"></path><path d="M5 10.2 H19 M5 13.8 H19" stroke="#c8c0c8" stroke-width="1.2"></path></svg>
<span class="t rd" style="left: 872.5px; top: 290px; letter-spacing: -0.1px;">Выровнять текст</span>
<div class="ddd" style="left:1008px;top:296.5px"></div>
<svg style="left:845px;top:322px" width="24" height="19" viewBox="0 0 24 19"><path d="M0 0.5 H10 L13.5 6.5 L10 12.5 H0 L3.5 6.5 Z" fill="#b9adb7"></path><rect x="9.6" y="6.6" width="13.8" height="11.8" fill="#fff" stroke="#c2b6c0" stroke-width="1.2"></rect><path d="M12 10.5 H13.5 M15 10.5 H21 M12 14 H13.5 M15 14 H21" stroke="#cfc5cd" stroke-width="1.1"></path></svg>
<span class="t rd" style="left: 872.5px; top: 322.5px; letter-spacing: 0.26px;">Преобразовать в SmartArt</span>
<div class="ddd" style="left:1090.5px;top:329px"></div>
<span class="t gl" style="left: 837.5px; top: 355px; letter-spacing: -0.3px;">Абзац</span>
<svg style="left:1092px;top:359px" width="9" height="9" viewBox="0 0 9 9"><path d="M0.5 6 V0.5 H6" fill="none" stroke="#cfcfcf" stroke-width="1"></path><path d="M3.5 3.5 L8 8 M8 4.5 V8 H4.5" fill="none" stroke="#cfcfcf" stroke-width="1"></path></svg>
<div class="sep" style="left:1108px;top:250px;height:120px"></div>
<!-- shapes gallery -->
<div class="a" style="left:1114px;top:252px;width:199px;height:90px;box-sizing:border-box;border:1px solid #c6c6c6;background:#fff"></div>
<div class="a" style="left:1292px;top:253px;width:20px;height:30px;background:#e1e1e1"></div>
<div class="a" style="left:1292px;top:253px;width:1px;height:88px;background:#d4d4d4"></div>
<div class="a" style="left:1292px;top:282px;width:20px;height:1px;background:#d4d4d4"></div>
<div class="a" style="left:1292px;top:310px;width:20px;height:1px;background:#d4d4d4"></div>
<div class="a" style="left:1299px;top:265px;width:0;height:0;border-left:3.5px solid transparent;border-right:3.5px solid transparent;border-bottom:4px solid #c8c8c8"></div>
<div class="dd" style="left:1299px;top:294px"></div>
<svg style="left:1298px;top:321px" width="9" height="9" viewBox="0 0 9 9"><path d="M0.5 1 H8.5" stroke="#777" stroke-width="1.3"></path><path d="M0.5 3.5 H8.5 L4.5 8Z" fill="#777"></path></svg>
<svg style="left:1114px;top:252.700px" width="178" height="90" viewBox="0 0 178 90"><g fill="none" stroke="#6b6b6b" stroke-width="1.1">
<rect x="4.5" y="5" width="21.5" height="18" fill="#fff"></rect><path d="M14 9.5 H23.5 M14 12.5 H23.5 M6.5 15.5 H23.5 M6.5 18.5 H23.5 M6.5 21 H23.5" stroke="#b5b5b5"></path>
<path d="M35 5.5 L55 24.5"></path><path d="M64 5.500 L84 24.5 M84 24.5 V21 M84 24.5 H80.500"></path>
<rect x="93.500" y="7.500" width="21" height="14.500"></rect><ellipse cx="133" cy="14.700" rx="10.500" ry="7.300"></ellipse><rect x="152" y="7.500" width="21" height="14.500" rx="3"></rect>
<path d="M6.500 54.500 L15 33.500 L23.500 54.500 Z"></path><path d="M34 36.500 H44 V52 H55"></path><path d="M63.500 36.500 H73 V52 H84.500 M81.500 49 L84.800 52 L81.500 55"></path>
<path d="M93.500 40.500 H103 V35 L114 44.500 L103 54 V48.500 H93.500 Z"></path><path d="M128.500 35 H137.500 V44.500 H143.500 L133 54.500 L122.500 44.500 H128.500 Z"></path><path d="M152 54 V40 C152 37 154 35 157 35 H165.500 C165 39.500 168 42.500 173 42 V51 C173 53 172 54 170 54 Z"></path>
<path d="M11 64 C16 62.500 17.500 66.500 13.500 69.500 C8.500 73 10 77 15 76 C19.500 75 20.500 79 18 81.500 C15.500 83.500 13.500 81.500 15 79.500 M18 81.500 L17.500 84.500"></path><path d="M34 66.500 C46 65.500 54 73 54.500 84"></path><path d="M63 78 C67.500 62 72.500 62 76 73 C79 84 83 84 85 83"></path>
</g><g fill="none" stroke="#555" stroke-width="1.500"><path d="M105 65.500 C101.500 65.500 101 67.500 101 70 V73 C101 75 100 76 98.500 76 C100 76 101 77 101 79 V82 C101 84.500 101.500 86.500 105 86.500"></path><path d="M129 65.500 C132.500 65.500 133 67.500 133 70 V73 C133 75 134 76 135.500 76 C134 76 133 77 133 79 V82 C133 84.500 132.500 86.500 129 86.500"></path></g>
<path d="M162.500 64.500 L165 72 H173 L166.600 76.700 L169 84.500 L162.500 79.700 L156 84.500 L158.400 76.700 L152 72 H160 Z" fill="none" stroke="#6b6b6b" stroke-width="1.1"></path>
<text x="6.500" y="13.500" font-family="Liberation Sans" font-size="9" font-weight="bold" fill="#3f6fb5">A</text></svg>
<!-- arrange -->
<svg style="left:1350px;top:255px" width="42" height="41" viewBox="0 0 42 41"><rect x="8.500" y="8.500" width="23.500" height="23.500" fill="#efc374"></rect><rect x=".6" y=".6" width="17.500" height="17.500" fill="#fff" stroke="#8a8a8a" stroke-width="1.1"></rect><rect x="22.600" y="22" width="17.500" height="17.500" fill="#fff" stroke="#8a8a8a" stroke-width="1.1"></rect></svg>
<span class="t rt" style="left: 1318px; top: 305px; letter-spacing: 0.35px;">Упорядочить</span>
<div class="dd" style="left:1368px;top:334px"></div>
<span class="t gl" style="left: 1356px; top: 355px; letter-spacing: -0.51px;">Рисование</span>
<!-- quick styles (disabled) -->
<svg style="left:1449px;top:255px" width="45" height="45" viewBox="0 0 45 45"><rect x=".8" y=".8" width="37" height="37" rx="7" fill="#f5eff4" stroke="#dcd2da" stroke-width="1.3"></rect><path d="M30 26 L43.500 11.500 L43.500 21 L34 31.500 Z" fill="#bdb4bc"></path><path d="M27 29 L33 33.500 C30 40 22 42.500 13 42 C20 39 23 35 27 29Z" fill="#c9c0c8"></path></svg>
<span class="t rd" style="left: 1429px; top: 305px; letter-spacing: -0.07px;">Экспресс-</span>
<span class="t rd" style="left: 1442px; top: 327px; letter-spacing: -0.54px;">стили</span>
<div class="ddd" style="left:1489.500px;top:334px"></div>
<!-- shape fill / outline / effects -->
<svg style="left:1517px;top:251px" width="19" height="21" viewBox="0 0 19 21"><path d="M1 12 L9 4.500 L17 12 L9.500 19.500 Z" fill="#fff" stroke="#c0b6be" stroke-width="1.3"></path><path d="M6 7.500 V3 C6 0.500 10.500 0.500 10.500 3 V5.500" fill="none" stroke="#b8aeb6" stroke-width="1.2"></path><path d="M17 12.500 C18.500 14.500 18.800 16 17.500 17 C16.200 16 16 14.500 17 12.500Z" fill="#c0b6be"></path></svg>
<span class="t rd" style="left: 1540.5px; top: 256px; letter-spacing: -0.09px;">Заливка фигуры</span>
<div class="ddd" style="left:1676px;top:262px"></div>
<svg style="left:1514px;top:283px" width="23" height="18" viewBox="0 0 23 18"><path d="M12 3 H0.700 V16.500 H15.500 V12" fill="none" stroke="#bdb4bc" stroke-width="1.3"></path><path d="M8 11.500 L18.500 0.800 L21.500 3.500 L11 14 L7 15 Z" fill="#c4bbc3"></path></svg>
<span class="t rd" style="left: 1540.5px; top: 286.5px; letter-spacing: 0.16px;">Контур фигуры</span>
<div class="ddd" style="left:1667.500px;top:292.500px"></div>
<svg style="left:1514px;top:315px" width="23" height="20" viewBox="0 0 23 20"><path d="M6 1 H21 C22 1 22.500 2 22 3 L17.500 14 H2 C1 14 0.500 13 1 12 Z" fill="#efe9ee" stroke="#c6bcc4" stroke-width="1.2"></path><path d="M1 13 L2.500 18.500 H17 L18 14" fill="#c9c0c8"></path></svg>
<span class="t rd" style="left: 1540.5px; top: 316.5px; letter-spacing: -0.44px;">Эффекты фигуры</span>
<div class="ddd" style="left:1682px;top:323px"></div>
<svg style="left:1684px;top:359px" width="9" height="9" viewBox="0 0 9 9"><path d="M0.5 6 V0.5 H6" fill="none" stroke="#cfcfcf" stroke-width="1"></path><path d="M3.5 3.5 L8 8 M8 4.5 V8 H4.5" fill="none" stroke="#cfcfcf" stroke-width="1"></path></svg>
<div class="sep" style="left:1699px;top:250px;height:120px"></div>
<!-- editing -->
<svg style="left:1709px;top:254px" width="19" height="19" viewBox="0 0 19 19"><circle cx="11.800" cy="7" r="5.800" fill="none" stroke="#3f6fb5" stroke-width="1.9"></circle><path d="M7.500 11.500 L1 18" stroke="#3f6fb5" stroke-width="2.400"></path></svg>
<span class="t rt" style="left: 1734.5px; top: 256px; letter-spacing: -0.4px;">Найти</span>
<span class="t" style="left: 1708px; top: 282px; font-size: 14px; color: rgb(85, 85, 85); letter-spacing: 0.21px;">ab</span>
<span class="t" style="left: 1714px; top: 292px; font-size: 14px; color: rgb(85, 85, 85); letter-spacing: 0.6px;">ac</span>
<svg style="left:1707px;top:296px" width="8" height="7" viewBox="0 0 8 7"><path d="M0.500 0 V3.500 H6.500 M4 1 L6.800 3.500 L4 6" fill="none" stroke="#3f6fb5" stroke-width="1.200"></path></svg>
<span class="t rt" style="left: 1734.5px; top: 286.5px; letter-spacing: -0.36px;">Заменить</span>
<div class="dd" style="left:1819px;top:293px"></div>
<svg style="left:1712px;top:314px" width="16" height="22" viewBox="0 0 16 22"><path d="M1 1 V17.500 L5 13.800 L8.200 20.800 L10.800 19.600 L7.600 12.800 H13 Z" fill="#fff" stroke="#555" stroke-width="1.200"></path></svg>
<span class="t rt" style="left: 1734.5px; top: 316.5px; letter-spacing: -0.62px;">Выделить</span>
<div class="dd" style="left:1813.500px;top:323px"></div>
<span class="t gl" style="left: 1709.5px; top: 355px; letter-spacing: -0.22px;">Редактирование</span>
<div class="sep" style="left:1835px;top:250px;height:120px"></div>
<svg style="left:1873px;top:358px" width="14" height="9" viewBox="0 0 14 9"><path d="M1 8 L7 1.800 L13 8" fill="none" stroke="#555" stroke-width="1.900"></path></svg>
<!-- LEFT PANEL -->
<style>.sn{font-size:22.500px;color:#555}.star{position:absolute}</style>
<svg width="0" height="0"><defs><symbol id="star" viewBox="0 0 16 14"><path d="M9 0.500 L11 5 L15.800 5.400 L12.200 8.600 L13.400 13.500 L9 10.900 L4.600 13.500 L5.800 8.600 L2.200 5.400 L7 5 Z" fill="#666"></path><path d="M0 1.500 L3 3.500 M0 6.500 H2 M0.500 11 L3 9.500" stroke="#777" stroke-width="1"></path></symbol>
<linearGradient id="teal" x1="0" x2="1"><stop offset="0" stop-color="#12aaa6"></stop><stop offset=".5" stop-color="#0e9a96"></stop><stop offset="1" stop-color="#14b3af"></stop></linearGradient>
<symbol id="shieldfull" viewBox="0 0 108 134"><defs><linearGradient id="gold" x1="0" y1="0" x2="1" y2="1"><stop offset="0" stop-color="#f6f0a0"></stop><stop offset=".5" stop-color="#fffde0"></stop><stop offset="1" stop-color="#e8d860"></stop></linearGradient></defs>
<path d="M1.500 1 H106.500 V102 C106.500 108 104 111.500 98 114 L60 130.500 C56 132.200 52 132.200 48 130.500 L10 114 C4 111.500 1.500 108 1.500 102 Z" fill="#18b0aa"></path>
<path d="M3 2.500 H105 V101.500 C105 107 102.500 110 97 112.500 L59.500 128.800 C56 130.200 52 130.200 48.500 128.800 L11 112.500 C5.500 110 3 107 3 101.500 Z" fill="#1aaea8" stroke="#e2dc4c" stroke-width="1.700"></path>
<g font-family="Liberation Sans" font-weight="bold" font-size="6.700" fill="#ecee98"><text x="7.500" y="13" textLength="93">Київський університет</text><text x="7.500" y="22.500" textLength="93">імені Бориса Грінченка</text></g>
<path d="M7.500 28 H101" stroke="#e2dc4c" stroke-width="1.300"></path>
<path d="M54 35 L16.500 78 H91.500 Z" fill="none" stroke="#f2f0a8" stroke-width="1.500"></path>
<path d="M54 34 L46.500 43.500 H61.500 Z" fill="#faf8c8"></path>
<path d="M54 43.500 V76" stroke="#f4f2c0" stroke-width="1.200"></path>
<path d="M54 47 L42 47.500 L20 75 C32 70 46 70 54 76 C62 70 76 70 88 75 L66 47.500 Z" fill="none" stroke="#f4f2c0" stroke-width="1.300"></path>
<path d="M20 77.500 C32 73 46 73 54 78 C62 73 76 73 88 77.500" fill="none" stroke="#f4f2c0" stroke-width="1.200"></path>
<g fill="url(#gold)"><path d="M54 84 L68 92 L56 112 H52 L40 92 Z"></path><path d="M38 82 L52 84 L38 97 L22 98 Z"></path><path d="M70 82 L56 84 L70 97 L86 98 Z"></path><path d="M8 86 L36 81 L20 92 Z"></path><path d="M100 86 L72 81 L88 92 Z"></path><path d="M20 100 L37 99 L44 106 L30 108 Z"></path><path d="M88 100 L71 99 L64 106 L78 108 Z"></path></g>
<text x="42.500" y="122.500" font-family="Liberation Sans" font-weight="bold" font-size="8.500" fill="#f4f6d0" textLength="22">1874</text></symbol>
<symbol id="shield" viewBox="0 0 108 132"><path d="M1 1 H107 V104 C107 110 104 113 98 115 L60 129 C56 130.500 52 130.500 48 129 L10 115 C4 113 1 110 1 104 Z" fill="#11a5a0" stroke="#c9dc52" stroke-width="2.200"></path></symbol></defs></svg>
<!-- scroll bar of thumbnails -->
<div class="a" style="left:288px;top:376px;width:24px;height:752px;background:#dadada"></div>
<div class="a" style="left:288px;top:376px;width:24px;height:24px;box-sizing:border-box;background:#fff;border:1px solid #d0d0d0"></div>
<div class="a" style="left:295px;top:384px;width:0;height:0;border-left:5px solid transparent;border-right:5px solid transparent;border-bottom:6px solid #666"></div>
<div class="a" style="left:288px;top:517px;width:24px;height:238px;box-sizing:border-box;background:#fff;border:1px solid #cfcfcf"></div>
<div class="a" style="left:314px;top:375px;width:3px;height:753px;background:#efefef"></div>
<!-- slide 3 -->
<span class="t sn" style="left:38px;top:397.500px">3</span><svg class="star" style="left:35px;top:425px" width="16" height="14"><use href="#star"></use></svg>
<div class="a" style="left:60px;top:402px;width:201px;height:151px;box-sizing:border-box;background:#fff;border:1px solid #cdcdcd"></div>
<svg style="left:61px;top:403px" width="199" height="149" viewBox="0 0 199 149">
<rect x="1" y="1" width="196" height="24" fill="url(#teal)"></rect><use href="#shieldfull" x="2" y="2" width="22" height="28"></use>
<g font-family="Liberation Serif" font-weight="bold" font-style="italic" font-size="5.600" fill="#fff"><text x="39" y="11.500" textLength="148">ТРАВМОВАНИЙ МИТЕЦЬ У СМИСЛОВОМУ ПОЛІ</text><text x="56" y="19.500" textLength="112">АПОЛЛОНІЙСТВА І ДІОНІСІЙСТВА»</text></g>
<ellipse cx="103" cy="89" rx="46" ry="44.500" fill="#fff" stroke="#9fb4b5" stroke-width="1"></ellipse>
<rect x="5" y="58" width="56" height="59" fill="#8e2a2a"></rect><path d="M22 117 C22 95 28 80 36 70 C38 64 42 64 44 70 C52 82 52 100 50 117 Z" fill="#d9d0cb" filter="url(#b1)"></path><rect x="40" y="74" width="10" height="16" fill="#b7a69c" filter="url(#b1)"></rect>
<rect x="147" y="53" width="46" height="66" fill="#0c0c0c"></rect><path d="M152 112 C156 100 160 92 166 86 C168 74 172 66 178 62 C184 66 186 80 182 92 C184 100 186 108 186 114 Z" fill="#cfcfcf" filter="url(#b1)"></path><rect x="150" y="110" width="40" height="6" fill="#bdbdbd" filter="url(#b1)"></rect>
<text x="72" y="91" font-family="Liberation Sans" font-weight="bold" font-size="4.800" fill="#111" textLength="61">ТРАВМОВАНИЙ МИТЕЦЬ</text>
<path d="M2 139.500 H196" stroke="#c4dcdc" stroke-width="1"></path><rect x="16" y="143.500" width="9" height="1.500" fill="#999"></rect><rect x="91" y="143.500" width="17" height="1.500" fill="#999"></rect><rect x="187" y="142.500" width="3" height="3" fill="#3a5a5a"></rect></svg>
<!-- slide 4 -->
<span class="t sn" style="left:38px;top:577.500px">4</span><svg class="star" style="left:35px;top:605px" width="16" height="14"><use href="#star"></use></svg>
<div class="a" style="left:60px;top:582px;width:201px;height:151px;box-sizing:border-box;background:#fff;border:1px solid #cdcdcd"></div>
<svg style="left:61px;top:583px" width="199" height="149" viewBox="0 0 199 149">
<rect x="3" y="2" width="195" height="23" fill="url(#teal)"></rect><use href="#shieldfull" x="3" y="2" width="24" height="29"></use>
<text x="61" y="16" font-family="Liberation Serif" font-weight="bold" font-style="italic" font-size="5.600" fill="#fff" textLength="103">РИСИ «ТРАВМОВАНОГО МИТЦЯ»</text>
<g stroke="#a8b5b8" stroke-width="1"><ellipse cx="86" cy="46" rx="20" ry="13" fill="#fff"></ellipse><ellipse cx="120" cy="45" rx="23.500" ry="12.500" fill="#c9c9c9"></ellipse><ellipse cx="151" cy="56" rx="17.500" ry="12.500" fill="#fff"></ellipse><ellipse cx="53" cy="62" rx="21" ry="13.500" fill="#c9c9c9"></ellipse><ellipse cx="156" cy="84" rx="24.500" ry="12.500" fill="#d4d4d4"></ellipse><ellipse cx="53" cy="89" rx="21" ry="12.500" fill="#fff"></ellipse><ellipse cx="134" cy="102" rx="23" ry="12.500" fill="#fff"></ellipse><ellipse cx="93" cy="106" rx="24.500" ry="13" fill="#c4c4c4"></ellipse></g>
<g fill="#777"><rect x="76" y="42" width="16" height="1.500"></rect><rect x="79" y="46" width="11" height="1.500"></rect><rect x="108" y="40" width="22" height="1.500"></rect><rect x="111" y="44" width="17" height="1.500"></rect><rect x="106" y="48" width="27" height="1.500"></rect><rect x="142" y="53" width="16" height="1.500"></rect><rect x="144" y="57" width="11" height="1.500"></rect><rect x="46" y="54" width="10" height="1.500"></rect><rect x="42" y="58" width="20" height="1.500"></rect><rect x="42" y="63" width="21" height="1.500"></rect><rect x="46" y="67" width="11" height="1.500"></rect><rect x="142" y="81" width="27" height="1.500"></rect><rect x="141" y="85" width="28" height="1.500"></rect><rect x="43" y="84" width="19" height="1.500"></rect><rect x="46" y="88" width="12" height="1.500"></rect><rect x="44" y="93" width="17" height="1.500"></rect><rect x="120" y="101" width="27" height="1.500"></rect><rect x="80" y="103" width="26" height="1.500"></rect><rect x="78" y="107" width="32" height="1.500"></rect></g>
<text x="73" y="76.500" font-family="Liberation Sans" font-weight="bold" font-size="4.800" fill="#111" textLength="62">ТРАВМОВАНИЙ МИТЕЦЬ</text>
<path d="M2 139.500 H196" stroke="#c4dcdc" stroke-width="1"></path><rect x="16" y="143.500" width="9" height="1.500" fill="#999"></rect><rect x="91" y="143.500" width="17" height="1.500" fill="#999"></rect><rect x="187" y="142.500" width="3" height="3" fill="#3a5a5a"></rect></svg>
<!-- slide 5 (selected) -->
<span class="t sn" style="left:38px;top:757.500px;color:#d04727">5</span><svg class="star" style="left:35px;top:785px" width="16" height="14"><use href="#star"></use></svg>
<div class="a" style="left:58px;top:760px;width:206px;height:156px;box-sizing:border-box;background:#fff;border:3px solid #cf4a2b"></div>
<div class="a" style="left:61px;top:763px;width:200px;height:150px;overflow:hidden"><div id="th5" class="a" style="left:0;top:0;width:0;height:0;transform-origin:0 0;transform:translate(-138.800px,-81.300px) scale(.2176)">
<div class="a" style="left:641px;top:379px;width:910px;height:686px;background:#fff;box-shadow:0 0 0 1px #d6d6d6"></div>
<div class="a" style="left:641px;top:379px;width:910px;height:111px;background:linear-gradient(180deg,#04b4b0 0,#05aca9 40%,#06a5a2 100%);overflow:hidden"><div class="a" style="left:190px;top:30px;width:650px;height:74px;background:#067472;filter:blur(20px)"></div><div class="a" style="left:250px;top:40px;width:540px;height:55px;background:#056663;filter:blur(14px);opacity:.45"></div></div>
<div class="a" style="left:641px;top:379px;width:910px;height:111px;background:linear-gradient(180deg,rgba(255,255,255,0) 0,rgba(255,255,255,0) 88%,rgba(255,255,255,.10) 100%)"></div>
<div class="a" style="left:641px;top:490px;width:910px;height:1px;background:#9adbd8"></div>
<div class="a" style="left:641px;top:378px;width:910px;height:1px;background:#c4f6f8"></div>
<!-- shield -->
<svg style="left:645px;top:383px" width="108" height="134" viewBox="0 0 108 134"><use href="#shieldfull"></use></svg>
<!-- title -->
<span class="t ser" style="left: 872.5px; top: 417px; font-size: 31px; font-weight: bold; font-style: italic; color: rgb(255, 255, 255); -webkit-text-stroke: 0.7px rgb(255, 255, 255); text-shadow: rgba(0, 55, 55, 0.75) 0px 0px 7px, rgba(0, 40, 40, 0.55) 2px 2px 4px; letter-spacing: -0.25px;">«ІМ’Я ТРОЯНДИ» У.ЕКО ЯК МАТРИЦЯ</span>
<span class="t ser" style="left: 969.5px; top: 452.5px; font-size: 31px; font-weight: bold; font-style: italic; color: rgb(255, 255, 255); -webkit-text-stroke: 0.7px rgb(255, 255, 255); text-shadow: rgba(0, 55, 55, 0.75) 0px 0px 7px, rgba(0, 40, 40, 0.55) 2px 2px 4px; letter-spacing: -0.48px;">ТРАВМОВАНОГО МИТЦЯ</span>

<!-- photo -->
<svg style="left:664px;top:662px" width="325" height="208" viewBox="0 0 325 208"><defs><clipPath><rect width="325" height="208"></rect></clipPath>
<linearGradient x1="0" y1="0" x2="1" y2="1"><stop offset="0" stop-color="#1a1613"></stop><stop offset=".45" stop-color="#322c24"></stop><stop offset="1" stop-color="#28221c"></stop></linearGradient>
<radialGradient cx=".45" cy=".6" r=".7"><stop offset="0" stop-color="#a59082"></stop><stop offset=".5" stop-color="#8c7464"></stop><stop offset="1" stop-color="#5c463c"></stop></radialGradient></defs><g clip-path="url(#cp)">
<rect width="325" height="208" fill="#080707"></rect>
<path d="M0 0 H186 L150 60 L100 125 L62 160 L40 208 H0 Z" fill="#f3f7f6" filter="url(#b2)"></path>
<path d="M60 128 L100 128 L70 165 L60 160Z" fill="#e9eeec" filter="url(#b2)"></path>
<g fill="#39342e" filter="url(#b1)"><rect x="46" y="-2" width="12" height="125"></rect><rect x="111" y="-2" width="13" height="100"></rect><rect x="4" y="34" width="155" height="14"></rect><rect x="58" y="117" width="44" height="11"></rect></g>
<path d="M0 16 L6 22 L22 70 L48 112 L64 128 L70 150 L60 180 L52 208 H0 Z" fill="#17110f" filter="url(#b2)"></path>
<path d="M22 122 C40 112 58 118 66 134 L62 170 L40 180 L22 160 Z" fill="#0d0a09" filter="url(#b2)"></path>
<path d="M48 208 C60 175 80 150 100 125 C125 90 150 40 176 12 C184 4 200 4 222 10 C236 18 240 40 238 60 L200 30 C178 40 160 70 152 110 C148 140 150 170 120 208 Z" fill="url(#hood)" filter="url(#b1)"></path>
<path d="M62 208 C80 170 110 140 128 100 C136 120 140 150 118 208 Z" fill="#3d362c" filter="url(#b3)"></path>
<path d="M176 12 C190 2 222 4 236 22 C250 50 262 100 280 150 C290 180 300 196 310 208 H200 L214 160 C232 130 240 90 232 50 C222 30 200 22 176 12Z" fill="#0e0c0b" filter="url(#b1)"></path>
<path d="M222 6 H325 V208 H300 C280 160 262 100 246 40 Z" fill="#0a0909"></path>
<path d="M246 20 C270 10 300 16 312 30 L300 50 L262 70 Z" fill="#19151a" filter="url(#b3)"></path>
<path d="M156 60 C158 40 176 28 198 30 C222 32 236 50 234 76 C234 100 226 128 212 146 C200 156 176 156 162 146 C150 130 150 90 156 60 Z" fill="url(#face)" filter="url(#b2)"></path>
<ellipse cx="186" cy="134" rx="26" ry="13" fill="#aa9c90" filter="url(#b3)"></ellipse>
<ellipse cx="196" cy="44" rx="26" ry="10" fill="#8d7466" filter="url(#b2)"></ellipse>
<path d="M150 148 C165 156 190 156 206 150 L204 180 C186 190 164 188 150 180 Z" fill="#7a6252" filter="url(#b2)"></path>
<path d="M140 176 C160 192 190 190 206 178 L240 208 H120 Z" fill="#0b0909" filter="url(#b1)"></path>
<ellipse cx="179" cy="62" rx="10" ry="9" fill="#7a4a40" filter="url(#b2)"></ellipse><ellipse cx="216" cy="71" rx="9.500" ry="9" fill="#7a4a40" filter="url(#b2)"></ellipse>
<ellipse cx="180" cy="61.500" rx="5.500" ry="4" fill="#efe6ea" filter="url(#b1)"></ellipse><ellipse cx="217" cy="70.500" rx="5" ry="4" fill="#efe6ea" filter="url(#b1)"></ellipse>
<path d="M192 70 C190 86 186 94 190 99 L206 99 C208 90 206 80 204 72Z" fill="#80665a" filter="url(#b2)"></path><path d="M160 80 C162 100 166 120 172 128 M226 96 C224 112 218 126 212 134" stroke="#6a5248" stroke-width="3" fill="none" filter="url(#b2)"></path>
<ellipse cx="190" cy="108" rx="12" ry="3.500" fill="#3a2420" filter="url(#b1)"></ellipse>
<path d="M306 30 L312 84" stroke="#3c2a1c" stroke-width="1.500"></path><path d="M307 82 H316 L314 152 H305 Z M291 113 H325 V124 H291 Z" fill="#6e4626" filter="url(#b2)"></path>
</g></svg>
<!-- connector lines -->
<svg style="left:641px;top:379px" width="910" height="686" viewBox="0 0 910 686"><defs><marker viewBox="0 0 10 10" refX="9" refY="5" markerWidth="9" markerHeight="9" orient="auto"><path d="M0 1.500 L10 5 L0 8.500 Z" fill="#a9d0d1"></path></marker></defs>
<g class="conn" stroke="#b4d6d7" stroke-width="3.2" fill="none">
<path d="M387 173 L264 267.500"></path><path d="M387 254 L326 279.500"></path><path d="M394 309.500 L341 317.500"></path><path d="M390 375 L342 378.500"></path><path d="M390 437 L340 436"></path><path d="M387 526 L292 463.500"></path><path d="M382 597 L219 465"></path></g></svg>
<!-- boxes -->
<style>.bx{position:absolute;box-sizing:border-box;border:3px solid #849fa2;border-radius:12px;background:transparent;box-shadow:0 0 2px rgba(100,140,140,.5)}.bt{font-family:"Liberation Serif",serif;font-weight:bold;font-style:italic;font-size:24px;color:#000;-webkit-text-stroke:.35px #000}</style>
<div class="bx" style="left:1030px;top:522px;width:476px;height:67px"></div>
<div class="bx" style="left:1030px;top:595px;width:476px;height:46px"></div>
<div class="bx" style="left:1030px;top:648px;width:476px;height:61px"></div>
<div class="bx" style="left:1030px;top:699px;width:491px;height:82px"></div>
<div class="bx" style="left:1023px;top:792px;width:483px;height:61px"></div>
<div class="bx" style="left:1030px;top:864px;width:483px;height:58px"></div>
<div class="bx" style="left:1030px;top:947px;width:491px;height:59px"></div>
<span class="t bt" style="left: 1059px; top: 529px; letter-spacing: 0.64px;">поєднання детективної і мистецької</span>
<span class="t bt" style="left: 1060px; top: 559px; letter-spacing: 0.62px;">сюжетних ліній на історичному тлі</span>
<span class="t bt" style="left: 1149.5px; top: 606px; letter-spacing: 0.66px;">прийом містифікації</span>
<span class="t bt" style="left: 1112.5px; top: 667px; letter-spacing: 0.62px;">тема пошуку ідентичності</span>
<span class="t bt" style="left: 1122px; top: 713px; letter-spacing: 0.58px;">міжтекстовий діалог-гра з</span>
<span class="t bt" style="left: 1049px; top: 743px; letter-spacing: 0.58px;">національним і світовим інтертекстом</span>
<span class="t bt" style="left: 1120.5px; top: 796px; letter-spacing: 0.67px;">перспектива множинних</span>
<span class="t bt" style="left: 1179.5px; top: 826px; letter-spacing: 0.56px;">інтерпретацій</span>
<span class="t bt" style="left: 1160px; top: 882px; letter-spacing: 0.65px;">митець із травмою</span>
<span class="t bt" style="left: 1071px; top: 966px; letter-spacing: 0.59px;">злочин як шлях до утвердження ідеї</span>

<!-- footer -->
<div class="a" style="left:641px;top:1020px;width:910px;height:2px;background:#6bb3b2"></div>
<span class="t" style="left: 706.5px; top: 1037px; font-size: 13px; color: rgb(51, 51, 51); letter-spacing: -0.2px;">2021 р.</span>
<span class="t" style="left: 1059px; top: 1037px; font-size: 13px; color: rgb(51, 51, 51); letter-spacing: -0.09px;">Гальчук О.В.</span>
<span class="t" style="left: 1502px; top: 1032.5px; font-size: 22px; font-weight: bold; color: rgb(23, 63, 62); letter-spacing: -0.25px;">3</span>
</div></div>
<!-- slide 6 (hover) -->
<span class="t sn" style="left:38px;top:937.500px">6</span><svg class="star" style="left:35px;top:965px" width="16" height="14"><use href="#star"></use></svg>
<div class="a" style="left:59px;top:941px;width:204px;height:153px;box-sizing:border-box;background:#fff;border:2px solid #7a7a7a"></div>
<svg style="left:61px;top:943px" width="200" height="149" viewBox="0 0 200 149">
<rect x="1" y="1" width="198" height="24" fill="url(#teal)"></rect><use href="#shieldfull" x="1" y="1" width="24" height="29"></use>
<g font-family="Liberation Serif" font-weight="bold" font-style="italic" font-size="5.800" fill="#fff"><text x="42" y="11" textLength="130">Романи Памука та Ільченка як твори з</text><text x="66" y="19.500" textLength="82">«травмованим митцем»</text></g>
<rect x="7" y="38" width="59" height="82" fill="#7a2c14"></rect><rect x="7" y="38" width="52" height="22" fill="#3c1a10"></rect><text x="9" y="54" font-family="Liberation Serif" font-weight="bold" font-size="12" fill="#e9dcc4" textLength="49" lengthAdjust="spacingAndGlyphs">ОРХАН ПАМУК</text><rect x="59" y="38" width="4" height="30" fill="#2c7a4a"></rect><path d="M12 70 L40 62 L56 78 L60 108 L30 116 L14 100 Z" fill="#c96a24" filter="url(#b1)"></path><path d="M28 78 L50 92 L40 106 L24 96 Z" fill="#e4d3c0" filter="url(#b1)"></path><path d="M20 64 L54 110" stroke="#4a1d12" stroke-width="2"></path>
<rect x="67.500" y="36.500" width="67" height="85" rx="9" fill="#fff" stroke="#9fb4b5" stroke-width="1"></rect>
<g font-family="Liberation Serif" font-weight="bold" font-style="italic" font-size="5.200" fill="#111"><text x="92" y="47.0" textLength="19">Попри</text><text x="81" y="54.7" textLength="41">травмованого</text><text x="76" y="62.4" textLength="51">митця зумовлена</text><text x="83" y="70.1" textLength="37">ключовими</text><text x="83" y="77.8" textLength="37">концептами</text><text x="72" y="85.5" textLength="58">романів – «перекід»,</text><text x="78" y="93.2" textLength="45">«вибір» – як</text><text x="72" y="100.9" textLength="58">модусами «травми»</text></g>
<path d="M143 42 L138 100 H148 Z" fill="#b0b0b0" filter="url(#b1)"></path><path d="M136 96 H150 V120 H134 Z" fill="#b4b4b4" filter="url(#b1)"></path><path d="M136 108 C150 100 170 100 190 112 V120 H134 Z" fill="#9c9c9c" filter="url(#b2)"></path><path d="M174 74 C184 84 190 100 188 116 H172 C178 104 178 90 174 74Z" fill="#5a5a5a" filter="url(#b1)"></path><path d="M160 92 C166 70 180 62 192 66" fill="none" stroke="#d9a0a0" stroke-width="1"></path><rect x="158" y="45" width="30" height="1.500" fill="#c88"></rect><rect x="164" y="49" width="24" height="1.500" fill="#c88"></rect>
<path d="M2 140.500 H198" stroke="#c4dcdc" stroke-width="1"></path><rect x="16" y="144.500" width="9" height="1.500" fill="#999"></rect><rect x="188" y="143.500" width="3" height="3" fill="#3a5a5a"></rect></svg>
<!-- slide 7 -->
<div class="a" style="left:30px;top:1121px;width:26px;height:7px;overflow:hidden"><span class="t sn" style="left:8px;top:-2px">7</span></div>
<div class="a" style="left:60px;top:1122px;width:201px;height:6px;background:#fff;border:1px solid #cdcdcd;border-bottom:none;box-sizing:border-box"></div>
<div class="a" style="left:62px;top:1124px;width:197px;height:4px;background:#12a29e"></div>
<!-- notes pane -->
<div class="a" style="left:318px;top:1080px;width:1580px;height:1px;background:#cfcfcf"></div>
<span class="t" style="left: 332px; top: 1092px; font-size: 21px; color: rgb(102, 102, 102); letter-spacing: 0.09px;">Заметки к слайду</span>
<!-- tooltip -->
<div class="a" style="left:158px;top:1099px;width:292px;height:29px;box-sizing:border-box;background:#fff;border:1px solid #c8c8c8;box-shadow:1px 1px 2px rgba(0,0,0,.15)"></div>
<span class="t" style="left: 161px; top: 1106px; font-size: 18.5px; color: rgb(104, 104, 104); letter-spacing: -0.65px;">Романи Памука та Ільченка як тво...</span>
<!-- cursor -->
<svg style="left:158px;top:1072px" width="18" height="27" viewBox="0 0 18 27"><path d="M1 1 V20.500 L5.600 16.200 L9.400 25.200 L12.800 23.800 L9 15 H15.500 Z" fill="#fff" stroke="#222" stroke-width="1.300" stroke-linejoin="round"></path></svg>
<!-- right scrollbar -->
<div class="a" style="left:1873px;top:376px;width:24px;height:624px;background:#dadada"></div>
<div class="a" style="left:1873px;top:376px;width:24px;height:24px;box-sizing:border-box;background:#fff;border:1px solid #d0d0d0"></div>
<div class="a" style="left:1880px;top:385px;width:0;height:0;border-left:5px solid transparent;border-right:5px solid transparent;border-bottom:6px solid #666"></div>
<div class="a" style="left:1873px;top:600px;width:24px;height:44px;box-sizing:border-box;background:#fff;border:1px solid #cfcfcf"></div>
<div class="a" style="left:1873px;top:976px;width:24px;height:24px;box-sizing:border-box;background:#fff;border:1px solid #d0d0d0"></div>
<div class="a" style="left:1880px;top:985px;width:0;height:0;border-left:5px solid transparent;border-right:5px solid transparent;border-top:6px solid #666"></div>
<svg style="left:1879px;top:1006px" width="12" height="13" viewBox="0 0 12 13"><path d="M6 0 L11.500 5.500 H0.500 Z M6 6 L11.500 11.500 H0.500 Z" fill="#666"></path><path d="M1 12.500 H11" stroke="#666" stroke-width="1"></path></svg>
<svg style="left:1879px;top:1032px" width="12" height="13" viewBox="0 0 12 13"><path d="M6 13 L11.500 7.500 H0.500 Z M6 7 L11.500 1.500 H0.500 Z" fill="#666"></path><path d="M1 0.500 H11" stroke="#666" stroke-width="1"></path></svg>
<!-- MAIN SLIDE -->
<div id="slidewrap" class="a" style="left:0;top:0;width:0;height:0">
<div class="a" style="left:641px;top:379px;width:910px;height:686px;background:#fff;box-shadow:0 0 0 1px #d6d6d6"></div>
<div class="a" style="left:641px;top:379px;width:910px;height:111px;background:linear-gradient(180deg,#04b4b0 0,#05aca9 40%,#06a5a2 100%);overflow:hidden"><div class="a" style="left:190px;top:30px;width:650px;height:74px;background:#067472;filter:blur(20px)"></div><div class="a" style="left:250px;top:40px;width:540px;height:55px;background:#056663;filter:blur(14px);opacity:.45"></div></div>
<div class="a" style="left:641px;top:379px;width:910px;height:111px;background:linear-gradient(180deg,rgba(255,255,255,0) 0,rgba(255,255,255,0) 88%,rgba(255,255,255,.10) 100%)"></div>
<div class="a" style="left:641px;top:490px;width:910px;height:1px;background:#9adbd8"></div>
<div class="a" style="left:641px;top:378px;width:910px;height:1px;background:#c4f6f8"></div>
<!-- shield -->
<svg style="left:645px;top:383px" width="108" height="134" viewBox="0 0 108 134"><use href="#shieldfull"></use></svg>
<!-- title -->
<span class="t ser" style="left: 872.5px; top: 417px; font-size: 31px; font-weight: bold; font-style: italic; color: rgb(255, 255, 255); -webkit-text-stroke: 0.7px rgb(255, 255, 255); text-shadow: rgba(0, 55, 55, 0.75) 0px 0px 7px, rgba(0, 40, 40, 0.55) 2px 2px 4px; letter-spacing: -0.25px;">«ІМ’Я ТРОЯНДИ» У.ЕКО ЯК МАТРИЦЯ</span>
<span class="t ser" style="left: 969.5px; top: 452.5px; font-size: 31px; font-weight: bold; font-style: italic; color: rgb(255, 255, 255); -webkit-text-stroke: 0.7px rgb(255, 255, 255); text-shadow: rgba(0, 55, 55, 0.75) 0px 0px 7px, rgba(0, 40, 40, 0.55) 2px 2px 4px; letter-spacing: -0.48px;">ТРАВМОВАНОГО МИТЦЯ</span>
<svg class="sq" style="left:641px;top:379px" width="910" height="111" viewBox="0 0 910 111"><g fill="none" stroke="#d9483b" stroke-width="1"><path d="M247 66.500 q1.500 -2 3 0 t3 0 t3 0 t3 0 t3 0 t3 0 t3 0 t3 0 t3 0 t3 0 t3 0 t3 0"></path><path d="M329 66.500 q1.500 -2 3 0 t3 0 t3 0 t3 0 t3 0 t3 0 t3 0 t3 0 t3 0 t3 0 t3 0 t3 0 t3 0 t3 0 t3 0 t3 0 t3 0 t3 0 t3 0 t3 0 t3 0 t3 0 t3 0 t3 0 t3 0 t3 0 t3 0 t3 0 t3 0 t3 0 t3 0 t3 0 t3 0 t3 0 t3 0 t3 0 t3 0 t3 0 t3 0 t3 0 t3 0 t3 0 t3 0 t3 0 t3 0 t3 0 t3 0 t3 0"></path><path d="M499 66.500 q1.500 -2 3 0 t3 0 t3 0 t3 0 t3 0 t3 0 t3 0 t3 0 t3 0 t3 0 t3 0 t3 0 t3 0 t3 0 t3 0 t3 0 t3 0 t3 0 t3 0 t3 0 t3 0 t3 0 t3 0 t3 0 t3 0 t3 0 t3 0 t3 0 t3 0 t3 0"></path></g></svg>
<!-- photo -->
<svg style="left:664px;top:662px" width="325" height="208" viewBox="0 0 325 208"><defs><clipPath id="cp"><rect width="325" height="208"></rect></clipPath>
<linearGradient id="hood" x1="0" y1="0" x2="1" y2="1"><stop offset="0" stop-color="#1a1613"></stop><stop offset=".45" stop-color="#322c24"></stop><stop offset="1" stop-color="#28221c"></stop></linearGradient>
<radialGradient id="face" cx=".45" cy=".6" r=".7"><stop offset="0" stop-color="#a59082"></stop><stop offset=".5" stop-color="#8c7464"></stop><stop offset="1" stop-color="#5c463c"></stop></radialGradient></defs><g clip-path="url(#cp)">
<rect width="325" height="208" fill="#080707"></rect>
<path d="M0 0 H186 L150 60 L100 125 L62 160 L40 208 H0 Z" fill="#f3f7f6" filter="url(#b2)"></path>
<path d="M60 128 L100 128 L70 165 L60 160Z" fill="#e9eeec" filter="url(#b2)"></path>
<g fill="#39342e" filter="url(#b1)"><rect x="46" y="-2" width="12" height="125"></rect><rect x="111" y="-2" width="13" height="100"></rect><rect x="4" y="34" width="155" height="14"></rect><rect x="58" y="117" width="44" height="11"></rect></g>
<path d="M0 16 L6 22 L22 70 L48 112 L64 128 L70 150 L60 180 L52 208 H0 Z" fill="#17110f" filter="url(#b2)"></path>
<path d="M22 122 C40 112 58 118 66 134 L62 170 L40 180 L22 160 Z" fill="#0d0a09" filter="url(#b2)"></path>
<path d="M48 208 C60 175 80 150 100 125 C125 90 150 40 176 12 C184 4 200 4 222 10 C236 18 240 40 238 60 L200 30 C178 40 160 70 152 110 C148 140 150 170 120 208 Z" fill="url(#hood)" filter="url(#b1)"></path>
<path d="M62 208 C80 170 110 140 128 100 C136 120 140 150 118 208 Z" fill="#3d362c" filter="url(#b3)"></path>
<path d="M176 12 C190 2 222 4 236 22 C250 50 262 100 280 150 C290 180 300 196 310 208 H200 L214 160 C232 130 240 90 232 50 C222 30 200 22 176 12Z" fill="#0e0c0b" filter="url(#b1)"></path>
<path d="M222 6 H325 V208 H300 C280 160 262 100 246 40 Z" fill="#0a0909"></path>
<path d="M246 20 C270 10 300 16 312 30 L300 50 L262 70 Z" fill="#19151a" filter="url(#b3)"></path>
<path d="M156 60 C158 40 176 28 198 30 C222 32 236 50 234 76 C234 100 226 128 212 146 C200 156 176 156 162 146 C150 130 150 90 156 60 Z" fill="url(#face)" filter="url(#b2)"></path>
<ellipse cx="186" cy="134" rx="26" ry="13" fill="#aa9c90" filter="url(#b3)"></ellipse>
<ellipse cx="196" cy="44" rx="26" ry="10" fill="#8d7466" filter="url(#b2)"></ellipse>
<path d="M150 148 C165 156 190 156 206 150 L204 180 C186 190 164 188 150 180 Z" fill="#7a6252" filter="url(#b2)"></path>
<path d="M140 176 C160 192 190 190 206 178 L240 208 H120 Z" fill="#0b0909" filter="url(#b1)"></path>
<ellipse cx="179" cy="62" rx="10" ry="9" fill="#7a4a40" filter="url(#b2)"></ellipse><ellipse cx="216" cy="71" rx="9.500" ry="9" fill="#7a4a40" filter="url(#b2)"></ellipse>
<ellipse cx="180" cy="61.500" rx="5.500" ry="4" fill="#efe6ea" filter="url(#b1)"></ellipse><ellipse cx="217" cy="70.500" rx="5" ry="4" fill="#efe6ea" filter="url(#b1)"></ellipse>
<path d="M192 70 C190 86 186 94 190 99 L206 99 C208 90 206 80 204 72Z" fill="#80665a" filter="url(#b2)"></path><path d="M160 80 C162 100 166 120 172 128 M226 96 C224 112 218 126 212 134" stroke="#6a5248" stroke-width="3" fill="none" filter="url(#b2)"></path>
<ellipse cx="190" cy="108" rx="12" ry="3.500" fill="#3a2420" filter="url(#b1)"></ellipse>
<path d="M306 30 L312 84" stroke="#3c2a1c" stroke-width="1.500"></path><path d="M307 82 H316 L314 152 H305 Z M291 113 H325 V124 H291 Z" fill="#6e4626" filter="url(#b2)"></path>
</g></svg>
<!-- connector lines -->
<svg style="left:641px;top:379px" width="910" height="686" viewBox="0 0 910 686"><defs><marker id="ah" viewBox="0 0 10 10" refX="9" refY="5" markerWidth="9" markerHeight="9" orient="auto"><path d="M0 1.500 L10 5 L0 8.500 Z" fill="#a9d0d1"></path></marker></defs>
<g class="conn" stroke="#b4d6d7" stroke-width="1.100" fill="none" marker-end="url(#ah)">
<path d="M387 173 L264 267.500"></path><path d="M387 254 L326 279.500"></path><path d="M394 309.500 L341 317.500"></path><path d="M390 375 L342 378.500"></path><path d="M390 437 L340 436"></path><path d="M387 526 L292 463.500"></path><path d="M382 597 L219 465"></path></g></svg>
<!-- boxes -->
<style>.bx{position:absolute;box-sizing:border-box;border:3px solid #849fa2;border-radius:12px;background:transparent;box-shadow:0 0 2px rgba(100,140,140,.5)}.bt{font-family:"Liberation Serif",serif;font-weight:bold;font-style:italic;font-size:24px;color:#000;-webkit-text-stroke:.35px #000}</style>
<div class="bx" style="left:1030px;top:522px;width:476px;height:67px"></div>
<div class="bx" style="left:1030px;top:595px;width:476px;height:46px"></div>
<div class="bx" style="left:1030px;top:648px;width:476px;height:61px"></div>
<div class="bx" style="left:1030px;top:699px;width:491px;height:82px"></div>
<div class="bx" style="left:1023px;top:792px;width:483px;height:61px"></div>
<div class="bx" style="left:1030px;top:864px;width:483px;height:58px"></div>
<div class="bx" style="left:1030px;top:947px;width:491px;height:59px"></div>
<span class="t bt" style="left: 1059px; top: 529px; letter-spacing: 0.64px;">поєднання детективної і мистецької</span>
<span class="t bt" style="left: 1060px; top: 559px; letter-spacing: 0.62px;">сюжетних ліній на історичному тлі</span>
<span class="t bt" style="left: 1149.5px; top: 606px; letter-spacing: 0.66px;">прийом містифікації</span>
<span class="t bt" style="left: 1112.5px; top: 667px; letter-spacing: 0.62px;">тема пошуку ідентичності</span>
<span class="t bt" style="left: 1122px; top: 713px; letter-spacing: 0.58px;">міжтекстовий діалог-гра з</span>
<span class="t bt" style="left: 1049px; top: 743px; letter-spacing: 0.58px;">національним і світовим інтертекстом</span>
<span class="t bt" style="left: 1120.5px; top: 796px; letter-spacing: 0.67px;">перспектива множинних</span>
<span class="t bt" style="left: 1179.5px; top: 826px; letter-spacing: 0.56px;">інтерпретацій</span>
<span class="t bt" style="left: 1160px; top: 882px; letter-spacing: 0.65px;">митець із травмою</span>
<span class="t bt" style="left: 1071px; top: 966px; letter-spacing: 0.59px;">злочин як шлях до утвердження ідеї</span>
<svg class="sq" style="left:641px;top:379px" width="910" height="686" viewBox="0 0 910 686"><g fill="none" stroke="#d9483b" stroke-width="1"><path id="sq1" d="M482 356 q1.500 -2 3 0 t3 0 t3 0 t3 0 t3 0 t3 0 t3 0 t3 0 t3 0 t3 0 t3 0 t3 0 t3 0 t3 0 t3 0 t3 0 t3 0 t3 0 t3 0 t3 0 t3 0 t3 0 t3 0 t3 0 t3 0 t3 0 t3 0 t3 0 t3 0 t3 0 t3 0 t3 0 t3 0 t3 0 t3 0 t3 0 t3 0 t3 0 t3 0 t3 0 t3 0 t3 0 t3 0 t3 0 t3 0 t3 0 t3 0 t3 0 t3 0 t3 0 t3 0 t3 0 t3 0 t3 0 t3 0 t3 0 t3 0 t3 0"></path><path d="M697 386 q1.500 -2 3 0 t3 0 t3 0 t3 0 t3 0 t3 0 t3 0 t3 0 t3 0 t3 0 t3 0 t3 0 t3 0 t3 0 t3 0 t3 0 t3 0 t3 0 t3 0 t3 0 t3 0 t3 0 t3 0 t3 0 t3 0 t3 0 t3 0 t3 0 t3 0 t3 0 t3 0 t3 0 t3 0 t3 0 t3 0 t3 0 t3 0 t3 0 t3 0 t3 0 t3 0 t3 0 t3 0 t3 0 t3 0 t3 0 t3 0 t3 0 t3 0 t3 0 t3 0 t3 0 t3 0 t3 0 t3 0"></path><path d="M418 671.500 q1.500 -2 3 0 t3 0 t3 0 t3 0 t3 0 t3 0 t3 0 t3 0 t3 0 t3 0 t3 0 t3 0 t3 0 t3 0 t3 0"></path></g></svg>
<!-- footer -->
<div class="a" style="left:641px;top:1020px;width:910px;height:2px;background:#6bb3b2"></div>
<span class="t" style="left: 706.5px; top: 1037px; font-size: 13px; color: rgb(51, 51, 51); letter-spacing: -0.2px;">2021 р.</span>
<span class="t" style="left: 1059px; top: 1037px; font-size: 13px; color: rgb(51, 51, 51); letter-spacing: -0.09px;">Гальчук О.В.</span>
<span class="t" style="left: 1502px; top: 1032.5px; font-size: 22px; font-weight: bold; color: rgb(23, 63, 62); letter-spacing: -0.25px;">3</span>
</div>
<!-- STATUS BAR -->
<style>.st{font-size:16px;color:#555}</style>
<div class="a" style="left:21px;top:1127px;width:1877px;height:1px;background:#dedede"></div>
<span class="t st" style="left: 28px; top: 1137px; letter-spacing: -0.68px;">Слайд 5 из 12</span>
<svg style="left:145px;top:1134px" width="22" height="18" viewBox="0 0 22 18"><path d="M0.600 1.500 H8 C9.500 1.500 10.500 2.500 10.500 4 V16.500 C10.500 15 9.500 14 8 14 H0.600 Z" fill="none" stroke="#666" stroke-width="1.200"></path><path d="M10.500 4 C10.500 2.500 11.500 1.500 13 1.500 H16.500 M10.500 16.500 C10.500 15 11.500 14 13 14 H16.500 V12" fill="none" stroke="#666" stroke-width="1.200"></path><path d="M14.500 5 L20.500 11 M20.500 5 L14.500 11" stroke="#555" stroke-width="1.700"></path></svg>
<span class="t st" style="left: 183.5px; top: 1137px; letter-spacing: -0.35px;">русский</span>
<svg style="left:1210px;top:1134px" width="18" height="17" viewBox="0 0 18 17"><path d="M9 0.500 L12.500 4.500 H5.500 Z" fill="#777"></path><path d="M2 7.500 H16 M0.500 11 H17.500 M0.500 14.500 H10" stroke="#888" stroke-width="1.200"></path></svg>
<span class="t st" style="left: 1233px; top: 1137px; letter-spacing: -0.39px;">Заметки</span>
<svg style="left:1313px;top:1133px" width="20" height="19" viewBox="0 0 20 19"><path d="M0.500 0.500 H19.500 V13 H9.500 L5 18 V13 H0.500 Z" fill="#666"></path></svg>
<span class="t st" style="left: 1337px; top: 1137px; letter-spacing: -0.44px;">Примечания</span>
<div class="a" style="left:1447px;top:1128px;width:44px;height:32px;background:#c8c8c8"></div>
<svg style="left:1460px;top:1135px" width="20" height="17" viewBox="0 0 20 17"><rect x=".6" y=".6" width="18.800" height="15.800" fill="none" stroke="#666" stroke-width="1.200"></rect><path d="M5 0.600 V16.400" stroke="#666" stroke-width="1.200"></path><rect x="8" y="3.500" width="8.500" height="6.500" fill="none" stroke="#666" stroke-width="1.200"></rect></svg>
<svg style="left:1503px;top:1134px" width="20" height="19" viewBox="0 0 20 19"><g fill="none" stroke="#666" stroke-width="1.200"><rect x=".6" y=".6" width="7.800" height="7"></rect><rect x="11.600" y=".6" width="7.800" height="7"></rect><rect x=".6" y="11" width="7.800" height="7"></rect><rect x="11.600" y="11" width="7.800" height="7"></rect></g></svg>
<svg style="left:1547px;top:1134px" width="21" height="18" viewBox="0 0 21 18"><path d="M10.500 2.500 V17 M0.600 1.200 H8 C9.500 1.200 10.500 2 10.500 3 C10.500 2 11.500 1.200 13 1.200 H20.400 V15 H13 C11.500 15 10.500 16 10.500 17 C10.500 16 9.500 15 8 15 H0.600 Z" fill="none" stroke="#666" stroke-width="1.200"></path><path d="M2.500 4.500 H8 M2.500 7.500 H8 M2.500 10.500 H8 M13 4.500 H18.500 M13 7.500 H18.500 M13 10.500 H18.500" stroke="#777" stroke-width="1.100"></path></svg>
<svg style="left:1591px;top:1134px" width="20" height="19" viewBox="0 0 20 19"><path d="M0.500 1 H19.500" stroke="#666" stroke-width="1.600"></path><path d="M2.500 1.500 V11.500 H17.500 V1.500" fill="none" stroke="#666" stroke-width="1.200"></path><path d="M10 11.500 V17 M6.500 17.800 H13.500" stroke="#666" stroke-width="1.300"></path></svg>
<div class="a" style="left:1629px;top:1142px;width:11px;height:2px;background:#555"></div>
<div class="a" style="left:1645px;top:1142.500px;width:147px;height:1px;background:#999"></div>
<div class="a" style="left:1718px;top:1140px;width:1px;height:6px;background:#999"></div>
<div class="a" style="left:1687.500px;top:1135px;width:6px;height:17px;background:#555"></div>
<div class="a" style="left:1796px;top:1142px;width:13px;height:2px;background:#555"></div><div class="a" style="left:1801.500px;top:1136.500px;width:2px;height:13px;background:#555"></div>
<span class="t st" style="left: 1826px; top: 1137px; letter-spacing: -0.68px;">65%</span>
<svg style="left:1872px;top:1135px" width="18" height="17" viewBox="0 0 18 17"><rect x=".6" y=".6" width="16.800" height="15.800" fill="none" stroke="#777" stroke-width="1.200"></rect><path d="M9 1 V5 M9 16 V12 M1 8.500 H5 M17 8.500 H13" stroke="#777" stroke-width="1.200"></path><path d="M7.500 4 L9 5.500 L10.500 4 M7.500 13 L9 11.500 L10.500 13 M4 7 L5.500 8.500 L4 10 M14 7 L12.500 8.500 L14 10" fill="none" stroke="#777" stroke-width="1"></path></svg>
<!-- TASKBAR -->
<div class="a" style="left:0;top:1160px;width:1919px;height:39px;background:linear-gradient(90deg,#444852 0,#4d525d 150px,#565b67 500px,#5c616d 800px,#595e6a 925px,#b9d9fb 932px,#b4d5f8 1250px,#afd0f5 1390px,#9dbde3 1435px,#8caace 1475px,#819ec3 1600px,#7d9bc0 1919px)"></div>
<div class="a" style="left:0;top:1160px;width:1919px;height:39px;background:linear-gradient(180deg,rgba(255,255,255,.16) 0,rgba(255,255,255,.06) 45%,rgba(0,0,20,.06) 55%,rgba(0,0,20,.12) 100%)"></div>
<div class="a" style="left:0;top:1160px;width:1919px;height:1px;background:#2c3038"></div>
<div class="a" style="left:0;top:1161px;width:1919px;height:1px;background:rgba(255,255,255,.28)"></div>
<!-- start orb -->
<div class="a" style="left:8px;top:1162px;width:37px;height:37px;border-radius:50%;background:radial-gradient(circle at 50% 35%,#8fd0f5 0,#3b8ed6 45%,#1b4f9c 80%,#12356e 100%);box-shadow:0 0 3px #0a1a30,inset 0 0 2px #cfeaff"></div>
<svg style="left:15px;top:1169px" width="24" height="23" viewBox="0 0 24 23"><path d="M1.500 4.500 C5 2.500 8 3 10.500 5 L9 10.500 C6.500 8.500 3.500 8 0 10 Z" fill="#e5522b"></path><path d="M12 5.500 C15 7.500 18.500 7.500 22 5.500 L20.500 11 C17 13 13.500 13 10.500 11 Z" fill="#7cc142"></path><path d="M-0.500 12 C3 10 6 10.500 8.500 12.500 L7 18 C4.500 16 1.500 15.500 -2 17.500 Z" fill="#3aa0e8"></path><path d="M10 13 C13 15 16.500 15 20 13 L18.500 18.500 C15 20.500 11.500 20.500 8.500 18.500 Z" fill="#f9c431"></path></svg>
<!-- media player -->
<div class="a" style="left:74px;top:1166px;width:26px;height:28px;background:linear-gradient(135deg,#9fd0f0,#5a9fd6);border-radius:2px;box-shadow:inset 0 0 0 1px #c7e4f7"></div>
<div class="a" style="left:78px;top:1171px;width:18px;height:18px;border-radius:50%;background:#f58a1f;box-shadow:0 0 0 1.500px #fff"></div>
<div class="a" style="left:84.500px;top:1175px;width:0;height:0;border-top:5px solid transparent;border-bottom:5px solid transparent;border-left:8px solid #fff"></div>
<!-- buttons -->
<style>.tb{position:absolute;top:1161px;height:38px;box-sizing:border-box;border:1px solid rgba(20,24,32,.75);border-radius:3px;background:linear-gradient(180deg,rgba(255,255,255,.30),rgba(255,255,255,.12) 48%,rgba(255,255,255,.04) 52%,rgba(255,255,255,.10));box-shadow:inset 0 0 0 1px rgba(255,255,255,.28)}</style>
<div class="tb" style="left:122px;width:58px"></div>
<div class="tb" style="left:184px;width:58px"></div>
<div class="tb" style="left:308px;width:58px"></div>
<div class="tb" style="left:369px;width:54px"></div><div class="tb" style="left:423px;width:4px"></div><div class="tb" style="left:427px;width:3px"></div>
<div class="tb" style="left:432px;width:53px"></div><div class="tb" style="left:485px;width:4px"></div>
<!-- sticky notes -->
<svg style="left:134px;top:1165px" width="34" height="32" viewBox="0 0 34 32"><path d="M4 2 L18 0.500 L22 18 L6 21 Z" fill="#9fd07a" stroke="#7fb45e" stroke-width=".8"></path><path d="M2 8 L12 5 L16 22 L5 25 Z" fill="#8ec0ea" stroke="#6fa3d0" stroke-width=".8"></path><path d="M12 8 L30 5 L33 24 L16 28 Z" fill="#f3e46b" stroke="#d9c84a" stroke-width=".8"></path></svg>
<!-- chrome -->
<svg style="left:197px;top:1164px" width="32" height="32" viewBox="0 0 32 32"><circle cx="16" cy="16" r="15" fill="#fff"></circle><path d="M16 16 L3 8.500 A15 15 0 0 1 29 8.500 Z" fill="#e94235"></path><path d="M16 16 L29 8.500 A15 15 0 0 1 16 31 Z" fill="#fbc116"></path><path d="M16 16 L16 31 A15 15 0 0 1 3 8.500 Z" fill="#33a852"></path><circle cx="16" cy="16" r="7" fill="#fff"></circle><circle cx="16" cy="16" r="5.500" fill="#4285f4"></circle></svg>
<!-- vlc -->
<svg style="left:261px;top:1163px" width="28" height="34" viewBox="0 0 28 34"><path d="M11 2 H17 L23 26 H5 Z" fill="#f58a1f"></path><path d="M9.700 8 H18.300 L19.600 13 H8.400 Z M7.300 18 H20.700 L21.800 22.500 H6.200 Z" fill="#f4f4f4"></path><path d="M1 32 L4 24.500 H24 L27 32 Z" fill="#f07b10"></path></svg>
<!-- explorer -->
<svg style="left:320px;top:1166px" width="34" height="30" viewBox="0 0 34 30"><path d="M1 4 H12 L14 7 H33 V29 H1 Z" fill="#e9c863" stroke="#b99732" stroke-width="1"></path><rect x="3" y="9" width="28" height="19" fill="#f7e7a4"></rect><path d="M4 1.500 h3 M9 2.500 h3" stroke="#3a9a40" stroke-width="2"></path><path d="M19 4 h3" stroke="#d44" stroke-width="2"></path><path d="M24 4.500 h3" stroke="#3a7ad0" stroke-width="2"></path><path d="M7 29 V20 C7 18 8 17 10 17 H24 C26 17 27 18 27 20 V29 H22 V22 H12 V29 Z" fill="#7fb9e6" stroke="#4a8cc6" stroke-width="1"></path></svg>
<!-- word -->
<div class="a" style="left:383px;top:1167px;width:27px;height:27px;box-sizing:border-box;background:#f4f6fb;border:2px solid #2b4d9c"></div>
<span class="t ser" style="left: 385px; top: 1166px; font-size: 27px; font-weight: bold; font-style: italic; color: rgb(31, 63, 143); letter-spacing: -1.02px;">W</span>
<!-- zoom -->
<div class="a" style="left:443px;top:1165px;width:31px;height:31px;border-radius:9px;background:#2d8cff"></div>
<svg style="left:443px;top:1165px" width="31" height="31" viewBox="0 0 31 31"><rect x="6" y="10" width="13" height="11" rx="2.500" fill="#fff"></rect><path d="M20 14 L25.500 10.500 V20.500 L20 17 Z" fill="#fff"></path></svg>
<!-- tray -->
<span class="t" style="left: 1465px; top: 1174px; font-size: 12.5px; color: rgb(255, 255, 255); letter-spacing: -0.23px;">Загрузки</span>
<svg style="left:1521px;top:1167px" width="17" height="17" viewBox="0 0 17 17"><path d="M5 2 H13 L16.500 5.500 V16.500 H5 Z" fill="#e7eef8" stroke="#5f7fb0" stroke-width=".9"></path><path d="M7 8 H15 M7 10.500 H15 M7 13 H15" stroke="#8aa6d0" stroke-width=".9"></path><rect x="0.500" y="0.500" width="9.500" height="9.500" fill="#1f7a3a" stroke="#0f5a25" stroke-width=".8"></rect><path d="M2.500 2.500 L8 8 M8 2.500 L2.500 8" stroke="#fff" stroke-width="1.400"></path></svg>
<span class="t" style="left: 1541px; top: 1169px; font-size: 12.5px; color: rgb(255, 255, 255); letter-spacing: -1.48px;">b11</span>
<span class="t" style="left: 1565px; top: 1164px; font-size: 12px; color: rgb(255, 255, 255); letter-spacing: 1.31px;">»</span>
<span class="t" style="left: 1583px; top: 1172px; font-size: 12.5px; color: rgb(255, 255, 255); letter-spacing: -0.94px;">EN</span>
<div class="a" style="left:1611px;top:1161px;width:22px;height:38px;background:linear-gradient(180deg,#5d6f8c,#5a6a86 60%,#7486a3);box-shadow:0 0 0 1px #4a5a75"></div>
<svg style="left:1613px;top:1170px" width="19" height="20" viewBox="0 0 19 20"><path d="M1 19 C4 12 9 5 18 1 C16 8 11 14 4 17 Z" fill="#b58fe0" stroke="#7d4fc0" stroke-width=".9"></path><path d="M2 18 L16 3" stroke="#6a3fb0" stroke-width=".8"></path></svg>
<div class="a" style="left:1639px;top:1174px;width:14px;height:14px;border-radius:4px;background:#2d8cff"></div>
<svg style="left:1639px;top:1174px" width="14" height="14" viewBox="0 0 14 14"><rect x="2.500" y="4.500" width="6" height="5" rx="1.200" fill="#fff"></rect><path d="M9 6.400 L11.600 4.800 V9.200 L9 7.600 Z" fill="#fff"></path></svg>
<div class="a" style="left:1662px;top:1173px;width:15px;height:15px;border-radius:5px;background:#fbfbfb;box-shadow:0 0 0 1px #9aa4b5"></div>
<svg style="left:1685px;top:1172px" width="18" height="18" viewBox="0 0 18 18"><rect x="5" y="3.500" width="12" height="9" fill="#dfe8f2" stroke="#333" stroke-width="1.300"></rect><path d="M11 12.500 V15.500 M7 16.300 H15" stroke="#333" stroke-width="1.400"></path><path d="M2.500 0.500 V6 M1 2 H4 M1 7 H4 V12 H1 Z" fill="#eee" stroke="#333" stroke-width="1"></path></svg>
<svg style="left:1709px;top:1172px" width="17" height="17" viewBox="0 0 17 17"><path d="M1 6 H4 L8.500 2 V15 L4 11 H1 Z" fill="#f2f2f2" stroke="#555" stroke-width=".9"></path><path d="M10.500 5.500 C12 7.500 12 9.500 10.500 11.500 M12.500 3.500 C15.500 7 15.500 10 12.500 13.500" fill="none" stroke="#f2f2f2" stroke-width="1.200"></path></svg>
<svg style="left:1733px;top:1171px" width="18" height="19" viewBox="0 0 18 19"><path d="M2 1 V18" stroke="#444" stroke-width="1.500"></path><path d="M3 2 C6 0.500 8 3.500 12 2 V9.500 C8 11 6 8 3 9.500 Z" fill="#fff" stroke="#555" stroke-width=".8"></path><circle cx="12.500" cy="13.500" r="4.800" fill="#e02020" stroke="#fff" stroke-width=".8"></circle><path d="M10.500 11.500 L14.500 15.500 M14.500 11.500 L10.500 15.500" stroke="#fff" stroke-width="1.400"></path></svg>
<svg style="left:1757px;top:1170px" width="18" height="19" viewBox="0 0 18 19"><path d="M2 19 V9 L9 5 L16 9 V19 Z" fill="#f5941e" stroke="#b8640a" stroke-width=".8"></path><path d="M9 5 V0.500 H15 L13.500 2.500 L15 4.500 H9.800" fill="#e8801a" stroke="#b8640a" stroke-width=".7"></path><path d="M9 8.500 V14 M9 15.500 V17" stroke="#fff" stroke-width="2"></path></svg>
<svg style="left:1782px;top:1170px" width="18" height="20" viewBox="0 0 18 20"><ellipse cx="9" cy="11" rx="5" ry="6" fill="#e9c890" stroke="#6a5030" stroke-width=".9"></ellipse><circle cx="9" cy="4.500" r="3" fill="#3a3a3a"></circle><path d="M4 8 L0.500 4 M14 8 L17.500 4 M4 13 L1 17 M14 13 L17 17" stroke="#444" stroke-width="1"></path><ellipse cx="4.500" cy="7" rx="3.500" ry="2" fill="#fff" opacity=".85"></ellipse><ellipse cx="13.500" cy="7" rx="3.500" ry="2" fill="#fff" opacity=".85"></ellipse></svg>
<svg style="left:1806px;top:1175px" width="16" height="11" viewBox="0 0 16 11"><rect x="1" y="2" width="9" height="7" rx="3.500" fill="none" stroke="#f2f2f2" stroke-width="1.700"></rect><rect x="6" y="2" width="9" height="7" rx="3.500" fill="none" stroke="#d8d8d8" stroke-width="1.700"></rect></svg>
<span class="t" style="left: 1853px; top: 1166px; font-size: 12.5px; color: rgb(255, 255, 255); letter-spacing: -0.66px;">18:09</span>
<span class="t" style="left: 1840.5px; top: 1183px; font-size: 12.5px; color: rgb(255, 255, 255); letter-spacing: -1.01px;">28.10.2021</span>
<div class="a" style="left:1906px;top:1161px;width:13px;height:38px;background:linear-gradient(180deg,rgba(255,255,255,.35),rgba(255,255,255,.1));border-left:1px solid rgba(40,60,90,.7);box-shadow:inset 1px 0 0 rgba(255,255,255,.4)"></div>

</body></html>
